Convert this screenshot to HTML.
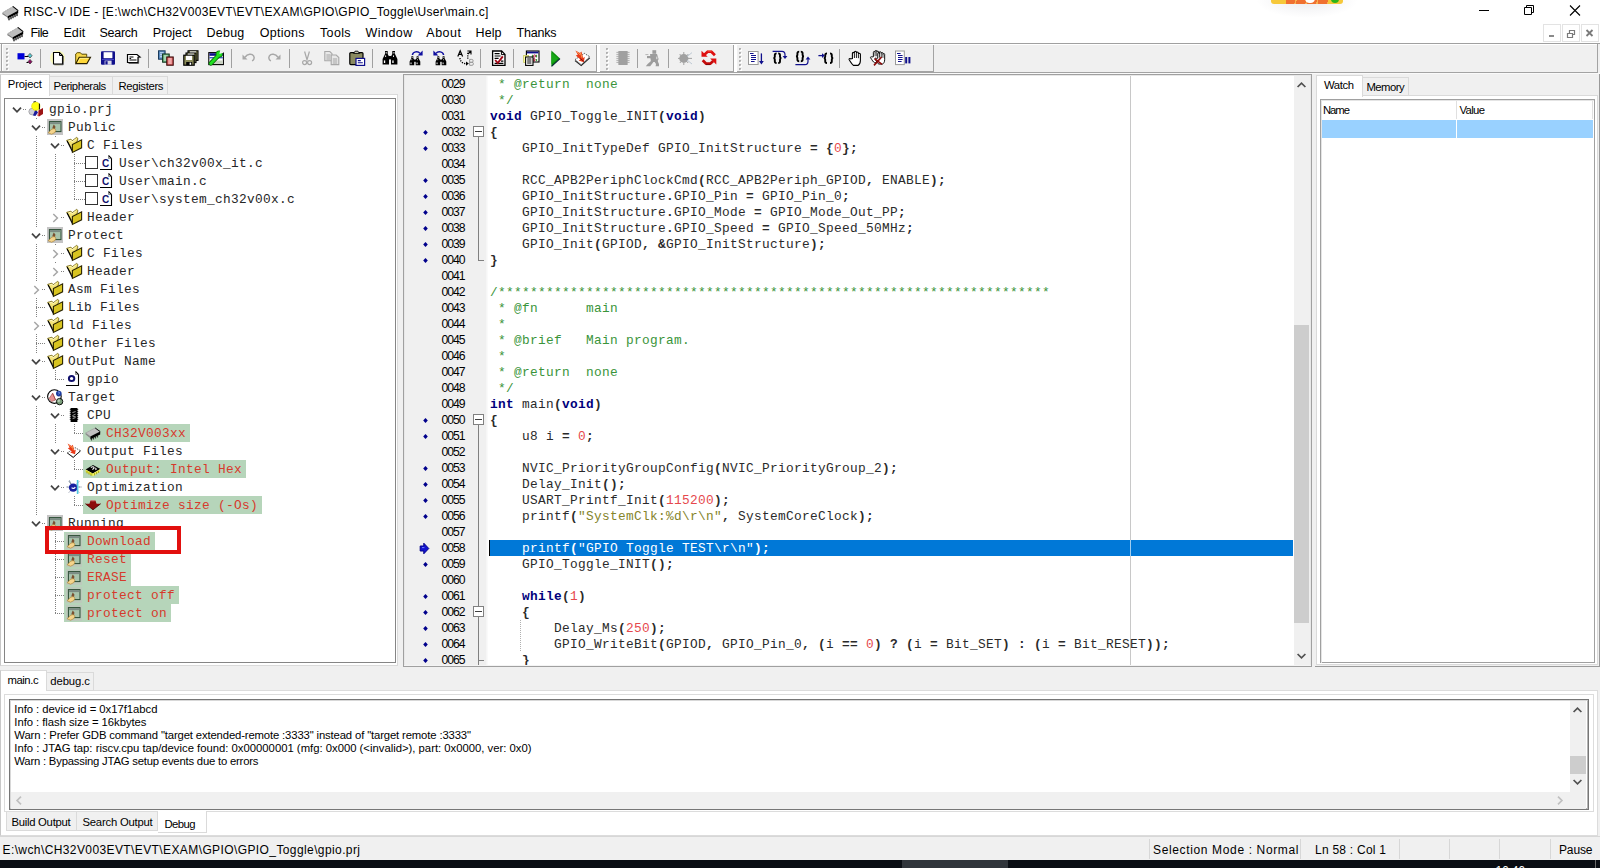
<!DOCTYPE html>
<html><head><meta charset="utf-8"><title>RISC-V IDE</title><style>
html,body{margin:0;padding:0}
body{width:1600px;height:868px;position:relative;overflow:hidden;background:#f0f0f0;font-family:"Liberation Sans",sans-serif;font-size:11px;color:#000}
div,span,svg{box-sizing:border-box}
.m{font-family:"Liberation Mono",monospace;font-size:12.8px;letter-spacing:0.32px;white-space:pre}
svg{position:absolute;overflow:visible}
</style></head>
<body>
<div style="position:absolute;left:0px;top:0px;width:1600px;height:43px;background:#fff"></div>
<div style="position:absolute;left:0px;top:43px;width:1600px;height:1px;background:#a0a0a0"></div>
<svg style="left:1.8px;top:5.6px" width="17" height="14" viewBox="0 0 17 14"><polygon points="0.4,6.6 10.8,0.4 16.2,4.6 5.6,10.2" fill="#bdbdbd"/><path d="M1.4,6.2l9.4,-5.6" stroke="#9a9a9a" stroke-width=".8" stroke-dasharray="1.2,.8"/><path d="M10.8,0.4l5.4,4.2" stroke="#000" stroke-width="1.1"/><polygon points="0.4,6.6 5.6,10.2 5.6,11.4 0.4,8.2" fill="#808080"/><polygon points="5.6,10.2 16.2,4.6 16.2,7.2 5.6,12.6" fill="#000"/><rect x="6.4" y="12.00" width="1.2" height="2.3" fill="#000"/><rect x="8.4" y="10.95" width="1.2" height="2.3" fill="#000"/><rect x="10.4" y="9.90" width="1.2" height="2.3" fill="#000"/><rect x="12.4" y="8.85" width="1.2" height="2.3" fill="#000"/><rect x="14.4" y="7.80" width="1.2" height="2.3" fill="#000"/></svg>
<svg style="left:6.8px;top:26.6px" width="17" height="14" viewBox="0 0 17 14"><polygon points="0.4,6.6 10.8,0.4 16.2,4.6 5.6,10.2" fill="#bdbdbd"/><path d="M1.4,6.2l9.4,-5.6" stroke="#9a9a9a" stroke-width=".8" stroke-dasharray="1.2,.8"/><path d="M10.8,0.4l5.4,4.2" stroke="#000" stroke-width="1.1"/><polygon points="0.4,6.6 5.6,10.2 5.6,11.4 0.4,8.2" fill="#808080"/><polygon points="5.6,10.2 16.2,4.6 16.2,7.2 5.6,12.6" fill="#000"/><rect x="6.4" y="12.00" width="1.2" height="2.3" fill="#000"/><rect x="8.4" y="10.95" width="1.2" height="2.3" fill="#000"/><rect x="10.4" y="9.90" width="1.2" height="2.3" fill="#000"/><rect x="12.4" y="8.85" width="1.2" height="2.3" fill="#000"/><rect x="14.4" y="7.80" width="1.2" height="2.3" fill="#000"/></svg>
<div style="position:absolute;left:23.40px;top:3.60px;height:16px;line-height:16px;font-size:12px;letter-spacing:0.317px;color:#000;white-space:pre;font-weight:400;font-family:'Liberation Sans',sans-serif;">RISC-V IDE - [E:\wch\CH32V003EVT\EVT\EXAM\GPIO\GPIO_Toggle\User\main.c]</div>
<div style="position:absolute;left:30.60px;top:24.80px;height:16px;line-height:16px;font-size:12.5px;letter-spacing:-0.652px;color:#000;white-space:pre;font-weight:400;font-family:'Liberation Sans',sans-serif;">File</div>
<div style="position:absolute;left:63.40px;top:24.80px;height:16px;line-height:16px;font-size:12.5px;letter-spacing:0.118px;color:#000;white-space:pre;font-weight:400;font-family:'Liberation Sans',sans-serif;">Edit</div>
<div style="position:absolute;left:99.40px;top:24.80px;height:16px;line-height:16px;font-size:12.5px;letter-spacing:-0.242px;color:#000;white-space:pre;font-weight:400;font-family:'Liberation Sans',sans-serif;">Search</div>
<div style="position:absolute;left:152.80px;top:24.80px;height:16px;line-height:16px;font-size:12.5px;letter-spacing:0.016px;color:#000;white-space:pre;font-weight:400;font-family:'Liberation Sans',sans-serif;">Project</div>
<div style="position:absolute;left:206.60px;top:24.80px;height:16px;line-height:16px;font-size:12.5px;letter-spacing:0.214px;color:#000;white-space:pre;font-weight:400;font-family:'Liberation Sans',sans-serif;">Debug</div>
<div style="position:absolute;left:259.70px;top:24.80px;height:16px;line-height:16px;font-size:12.5px;letter-spacing:0.301px;color:#000;white-space:pre;font-weight:400;font-family:'Liberation Sans',sans-serif;">Options</div>
<div style="position:absolute;left:320.00px;top:24.80px;height:16px;line-height:16px;font-size:12.5px;letter-spacing:0.353px;color:#000;white-space:pre;font-weight:400;font-family:'Liberation Sans',sans-serif;">Tools</div>
<div style="position:absolute;left:365.40px;top:24.80px;height:16px;line-height:16px;font-size:12.5px;letter-spacing:0.486px;color:#000;white-space:pre;font-weight:400;font-family:'Liberation Sans',sans-serif;">Window</div>
<div style="position:absolute;left:426.30px;top:24.80px;height:16px;line-height:16px;font-size:12.5px;letter-spacing:0.507px;color:#000;white-space:pre;font-weight:400;font-family:'Liberation Sans',sans-serif;">About</div>
<div style="position:absolute;left:475.60px;top:24.80px;height:16px;line-height:16px;font-size:12.5px;letter-spacing:0.060px;color:#000;white-space:pre;font-weight:400;font-family:'Liberation Sans',sans-serif;">Help</div>
<div style="position:absolute;left:516.50px;top:24.80px;height:16px;line-height:16px;font-size:12.5px;letter-spacing:-0.180px;color:#000;white-space:pre;font-weight:400;font-family:'Liberation Sans',sans-serif;">Thanks</div>
<svg style="left:1470px;top:0" width="130" height="22" viewBox="0 0 130 22"><path d="M9,10.5h10" stroke="#000" stroke-width="1"/><path d="M54.5,7.5h7v7h-7z M56.5,7.5v-2h7v7h-2" fill="none" stroke="#000" stroke-width="1"/><path d="M100,5.5l10,10 M110,5.5l-10,10" stroke="#000" stroke-width="1.1"/></svg>
<div style="position:absolute;left:1543px;top:24px;width:18px;height:18px;background:#fff;border:1px solid #e3e3e3"></div>
<div style="position:absolute;left:1562px;top:24px;width:18px;height:18px;background:#fff;border:1px solid #e3e3e3"></div>
<div style="position:absolute;left:1581px;top:24px;width:18px;height:18px;background:#fff;border:1px solid #e3e3e3"></div>
<svg style="left:1543px;top:24px" width="56" height="18" viewBox="0 0 56 18"><path d="M6,12h5" stroke="#8a8a8a" stroke-width="2"/><path d="M24.5,9.5h5v4h-5z M26.5,9.5v-3h5v4h-2" fill="none" stroke="#7a7a7a" stroke-width="1.2"/><path d="M43.5,6l6,6 M49.5,6l-6,6" stroke="#7a7a7a" stroke-width="1.8"/></svg>
<div style="position:absolute;left:1256px;top:0px;width:102px;height:18px;background:radial-gradient(ellipse 50% 100% at 50% 0%, rgba(60,60,90,0.11), rgba(60,60,90,0.04) 60%, rgba(0,0,0,0) 100%)"></div>
<div style="position:absolute;left:1271px;top:0px;width:72px;height:4px;background:#f6c83a;border-radius:0 0 3px 3px"></div>
<div style="position:absolute;left:1286px;top:0px;width:42px;height:4px;background:repeating-linear-gradient(105deg,#f07030 0 9px,#f8b050 9px 10.5px)"></div>
<div style="position:absolute;left:1304.5px;top:-6px;width:10px;height:9px;background:#fff;border-radius:5px"></div>
<div style="position:absolute;left:1331px;top:-5px;width:8px;height:7.5px;background:#2cb418;border-radius:4px"></div>
<div style="position:absolute;left:0px;top:836px;width:1600px;height:1px;background:#d7d7d7"></div>
<div style="position:absolute;left:2.50px;top:841.60px;height:16px;line-height:16px;font-size:12px;letter-spacing:0.398px;color:#000;white-space:pre;font-weight:400;font-family:'Liberation Sans',sans-serif;">E:\wch\CH32V003EVT\EVT\EXAM\GPIO\GPIO_Toggle\gpio.prj</div>
<div style="position:absolute;left:1149px;top:839px;width:1px;height:20px;background:#d7d7d7"></div>
<div style="position:absolute;left:1300px;top:839px;width:1px;height:20px;background:#d7d7d7"></div>
<div style="position:absolute;left:1399px;top:839px;width:1px;height:20px;background:#d7d7d7"></div>
<div style="position:absolute;left:1449px;top:839px;width:1px;height:20px;background:#d7d7d7"></div>
<div style="position:absolute;left:1499px;top:839px;width:1px;height:20px;background:#d7d7d7"></div>
<div style="position:absolute;left:1550px;top:839px;width:1px;height:20px;background:#d7d7d7"></div>
<div style="position:absolute;left:1153.00px;top:841.60px;height:16px;line-height:16px;font-size:12px;letter-spacing:0.641px;color:#000;white-space:pre;font-weight:400;font-family:'Liberation Sans',sans-serif;">Selection Mode : Normal</div>
<div style="position:absolute;left:1315.00px;top:841.60px;height:16px;line-height:16px;font-size:12px;letter-spacing:0.246px;color:#000;white-space:pre;font-weight:400;font-family:'Liberation Sans',sans-serif;">Ln 58 : Col 1</div>
<div style="position:absolute;left:1559.00px;top:841.60px;height:16px;line-height:16px;font-size:12px;letter-spacing:-0.133px;color:#000;white-space:pre;font-weight:400;font-family:'Liberation Sans',sans-serif;">Pause</div>
<div style="position:absolute;left:0px;top:860px;width:1600px;height:8px;background:#090d13"></div>
<div style="position:absolute;left:902px;top:860px;width:106px;height:8px;background:#30353b"></div>
<div style="position:absolute;left:1495.50px;top:862.60px;height:16px;line-height:16px;font-size:12px;letter-spacing:-0.133px;color:#fff;white-space:pre;font-weight:400;font-family:'Liberation Sans',sans-serif;">16:46</div>
<div style="position:absolute;left:1595px;top:860px;width:1px;height:8px;background:#6a6a6a"></div>
<div style="position:absolute;left:0px;top:44px;width:1600px;height:28px;background:#f0f0f0"></div>
<div style="position:absolute;left:0px;top:44px;width:1598px;height:1px;background:#fff"></div>
<div style="position:absolute;left:0px;top:71px;width:934px;height:1px;background:#a3a3a3"></div>
<div style="position:absolute;left:0px;top:72px;width:1598px;height:1px;background:#a3a3a3"></div>
<div style="position:absolute;left:0px;top:73px;width:1600px;height:1px;background:#fafafa"></div>
<div style="position:absolute;left:1597px;top:44px;width:1px;height:28px;background:#a3a3a3"></div>
<div style="position:absolute;left:1px;top:44px;width:1px;height:27px;background:#a3a3a3"></div>
<div style="position:absolute;left:2px;top:45px;width:1px;height:26px;background:#fff"></div>
<div style="position:absolute;left:596px;top:45px;width:1px;height:26px;background:#a3a3a3"></div>
<div style="position:absolute;left:597px;top:45px;width:3px;height:27px;background:#fff"></div>
<div style="position:absolute;left:733px;top:45px;width:1px;height:26px;background:#a3a3a3"></div>
<div style="position:absolute;left:734px;top:45px;width:3px;height:27px;background:#fff"></div>
<div style="position:absolute;left:933px;top:45px;width:1px;height:26px;background:#a3a3a3"></div>
<div style="position:absolute;left:934px;top:45px;width:1px;height:27px;background:#f0f0f0"></div>
<div style="position:absolute;left:6px;top:48px;width:2px;height:2px;background:#b0b0b0"></div><div style="position:absolute;left:7px;top:49px;width:2px;height:2px;background:#fff"></div><div style="position:absolute;left:7px;top:49px;width:1px;height:1px;background:#c8c8c8"></div><div style="position:absolute;left:6px;top:52px;width:2px;height:2px;background:#b0b0b0"></div><div style="position:absolute;left:7px;top:53px;width:2px;height:2px;background:#fff"></div><div style="position:absolute;left:7px;top:53px;width:1px;height:1px;background:#c8c8c8"></div><div style="position:absolute;left:6px;top:56px;width:2px;height:2px;background:#b0b0b0"></div><div style="position:absolute;left:7px;top:57px;width:2px;height:2px;background:#fff"></div><div style="position:absolute;left:7px;top:57px;width:1px;height:1px;background:#c8c8c8"></div><div style="position:absolute;left:6px;top:60px;width:2px;height:2px;background:#b0b0b0"></div><div style="position:absolute;left:7px;top:61px;width:2px;height:2px;background:#fff"></div><div style="position:absolute;left:7px;top:61px;width:1px;height:1px;background:#c8c8c8"></div><div style="position:absolute;left:6px;top:64px;width:2px;height:2px;background:#b0b0b0"></div><div style="position:absolute;left:7px;top:65px;width:2px;height:2px;background:#fff"></div><div style="position:absolute;left:7px;top:65px;width:1px;height:1px;background:#c8c8c8"></div><div style="position:absolute;left:6px;top:68px;width:2px;height:2px;background:#b0b0b0"></div><div style="position:absolute;left:7px;top:69px;width:2px;height:2px;background:#fff"></div><div style="position:absolute;left:7px;top:69px;width:1px;height:1px;background:#c8c8c8"></div>
<div style="position:absolute;left:606px;top:48px;width:2px;height:2px;background:#b0b0b0"></div><div style="position:absolute;left:607px;top:49px;width:2px;height:2px;background:#fff"></div><div style="position:absolute;left:607px;top:49px;width:1px;height:1px;background:#c8c8c8"></div><div style="position:absolute;left:606px;top:52px;width:2px;height:2px;background:#b0b0b0"></div><div style="position:absolute;left:607px;top:53px;width:2px;height:2px;background:#fff"></div><div style="position:absolute;left:607px;top:53px;width:1px;height:1px;background:#c8c8c8"></div><div style="position:absolute;left:606px;top:56px;width:2px;height:2px;background:#b0b0b0"></div><div style="position:absolute;left:607px;top:57px;width:2px;height:2px;background:#fff"></div><div style="position:absolute;left:607px;top:57px;width:1px;height:1px;background:#c8c8c8"></div><div style="position:absolute;left:606px;top:60px;width:2px;height:2px;background:#b0b0b0"></div><div style="position:absolute;left:607px;top:61px;width:2px;height:2px;background:#fff"></div><div style="position:absolute;left:607px;top:61px;width:1px;height:1px;background:#c8c8c8"></div><div style="position:absolute;left:606px;top:64px;width:2px;height:2px;background:#b0b0b0"></div><div style="position:absolute;left:607px;top:65px;width:2px;height:2px;background:#fff"></div><div style="position:absolute;left:607px;top:65px;width:1px;height:1px;background:#c8c8c8"></div><div style="position:absolute;left:606px;top:68px;width:2px;height:2px;background:#b0b0b0"></div><div style="position:absolute;left:607px;top:69px;width:2px;height:2px;background:#fff"></div><div style="position:absolute;left:607px;top:69px;width:1px;height:1px;background:#c8c8c8"></div>
<div style="position:absolute;left:739px;top:48px;width:2px;height:2px;background:#b0b0b0"></div><div style="position:absolute;left:740px;top:49px;width:2px;height:2px;background:#fff"></div><div style="position:absolute;left:740px;top:49px;width:1px;height:1px;background:#c8c8c8"></div><div style="position:absolute;left:739px;top:52px;width:2px;height:2px;background:#b0b0b0"></div><div style="position:absolute;left:740px;top:53px;width:2px;height:2px;background:#fff"></div><div style="position:absolute;left:740px;top:53px;width:1px;height:1px;background:#c8c8c8"></div><div style="position:absolute;left:739px;top:56px;width:2px;height:2px;background:#b0b0b0"></div><div style="position:absolute;left:740px;top:57px;width:2px;height:2px;background:#fff"></div><div style="position:absolute;left:740px;top:57px;width:1px;height:1px;background:#c8c8c8"></div><div style="position:absolute;left:739px;top:60px;width:2px;height:2px;background:#b0b0b0"></div><div style="position:absolute;left:740px;top:61px;width:2px;height:2px;background:#fff"></div><div style="position:absolute;left:740px;top:61px;width:1px;height:1px;background:#c8c8c8"></div><div style="position:absolute;left:739px;top:64px;width:2px;height:2px;background:#b0b0b0"></div><div style="position:absolute;left:740px;top:65px;width:2px;height:2px;background:#fff"></div><div style="position:absolute;left:740px;top:65px;width:1px;height:1px;background:#c8c8c8"></div><div style="position:absolute;left:739px;top:68px;width:2px;height:2px;background:#b0b0b0"></div><div style="position:absolute;left:740px;top:69px;width:2px;height:2px;background:#fff"></div><div style="position:absolute;left:740px;top:69px;width:1px;height:1px;background:#c8c8c8"></div>
<div style="position:absolute;left:40px;top:49px;width:1px;height:19px;background:#a0a0a0"></div>
<div style="position:absolute;left:148px;top:49px;width:1px;height:19px;background:#a0a0a0"></div>
<div style="position:absolute;left:231px;top:49px;width:1px;height:19px;background:#a0a0a0"></div>
<div style="position:absolute;left:289px;top:49px;width:1px;height:19px;background:#a0a0a0"></div>
<div style="position:absolute;left:372px;top:49px;width:1px;height:19px;background:#a0a0a0"></div>
<div style="position:absolute;left:480px;top:49px;width:1px;height:19px;background:#a0a0a0"></div>
<div style="position:absolute;left:513px;top:49px;width:1px;height:19px;background:#a0a0a0"></div>
<div style="position:absolute;left:637px;top:49px;width:1px;height:19px;background:#a0a0a0"></div>
<div style="position:absolute;left:668px;top:49px;width:1px;height:19px;background:#a0a0a0"></div>
<div style="position:absolute;left:839px;top:49px;width:1px;height:19px;background:#a0a0a0"></div>
<svg style="left:16.50px;top:50px" width="16" height="17" viewBox="0 0 16 17"><rect x="0.5" y="3.2" width="7" height="6.2" fill="#0000d8"/><path d="M7.5,6.5h4M9.5,12.5h2" stroke="#000" stroke-width="1"/><path d="M13,3.4l2.1,2.3l-2.1,2.3l-2.1,-2.3z" fill="#58c8d0" stroke="#222" stroke-width=".6"/><path d="M13,9.4l2.1,2.3l-2.1,2.3l-2.1,-2.3z" fill="#8a1060" stroke="#222" stroke-width=".6"/></svg>
<svg style="left:50.00px;top:50px" width="16" height="17" viewBox="0 0 16 17"><circle cx="7.5" cy="8" r="7.6" fill="#ffff90" opacity=".55"/><path d="M3.5,2.5h6l3,3v8.5h-9z" fill="#fff" stroke="#000" stroke-width="1.1"/><path d="M9.5,2.5v3h3" fill="none" stroke="#000" stroke-width="1"/><path d="M13.2,6v8.7h-9" fill="none" stroke="#333" stroke-width=".9"/></svg>
<svg style="left:75.00px;top:50px" width="16" height="17" viewBox="0 0 16 17"><path d="M0.7,13.5v-9.5l1.5,-1.3h3.2l1.3,1.5h5v2.5" fill="#f8d84a" stroke="#5a4a00" stroke-width="1"/><path d="M0.9,13.6l3.3,-6.3h11.3l-3.6,6.3z" fill="#ffd83a" stroke="#2a2000" stroke-width="1.1"/><path d="M3,12.4l2,-4h8.6" stroke="#fff4a0" stroke-width=".8" fill="none"/></svg>
<svg style="left:100.00px;top:50px" width="16" height="17" viewBox="0 0 16 17"><rect x="1" y="1.2" width="14" height="13.6" rx="1" fill="#10108c"/><rect x="3.6" y="2.2" width="8.8" height="6" fill="#fff"/><rect x="4.6" y="10.6" width="7" height="4.2" fill="#d8d8e8"/><rect x="5.4" y="11.2" width="2.2" height="3.2" fill="#10108c"/><rect x="2" y="9" width="12" height=".9" fill="#4a4acc"/></svg>
<svg style="left:125.00px;top:50px" width="16" height="17" viewBox="0 0 16 17"><path d="M2.5,4.5h9.5l3,2.6l-2,.1v5.3h-10.5z" fill="#fff" stroke="#000" stroke-width="1.2"/><path d="M4.5,7h4M4.5,10h7M4.5,8.5h1.6" stroke="#000" stroke-width="1.1"/><path d="M13.6,8v5.4h-10" stroke="#444" stroke-width=".9" fill="none"/></svg>
<svg style="left:157.50px;top:50px" width="16" height="17" viewBox="0 0 16 17"><rect x="0.5" y="0.8" width="6.6" height="8.4" fill="#5c8cc0" stroke="#1a3a5c" stroke-width="1"/><path d="M2,2.8h3.6M2,4.8h3.6M2,6.8h3.6" stroke="#d8e8ff" stroke-width="1"/><rect x="4.6" y="4" width="6.6" height="8.2" fill="#6cb080" stroke="#0c3018" stroke-width="1"/><path d="M6.1,6h3.6M6.1,8h3.6M6.1,10h3.6" stroke="#e0ffe8" stroke-width="1"/><rect x="8.8" y="7" width="6.4" height="8.2" fill="#e06868" stroke="#3a0606" stroke-width="1.1"/><path d="M10.3,9h3.4M10.3,11h3.4M10.3,13h3.4" stroke="#ffe8e8" stroke-width="1"/></svg>
<svg style="left:182.50px;top:50px" width="16" height="17" viewBox="0 0 16 17"><rect x="5" y="0.8" width="10" height="9.6" fill="#8a8a58" stroke="#000" stroke-width="1.1"/><rect x="7" y="1.4" width="6" height="3" fill="#fff"/><rect x="3" y="3" width="10" height="9.6" fill="#8a8a58" stroke="#000" stroke-width="1.1"/><rect x="5" y="3.6" width="6" height="3" fill="#fff"/><rect x="0.8" y="5.2" width="10.4" height="10" fill="#8a8a58" stroke="#000" stroke-width="1.2"/><rect x="3" y="5.8" width="6" height="4.2" fill="#fff"/><rect x="3.2" y="12" width="6" height="3.2" fill="#000"/><rect x="6.6" y="12.6" width="1.6" height="2.2" fill="#fff"/></svg>
<svg style="left:208.00px;top:50px" width="16" height="17" viewBox="0 0 16 17"><rect x="0.8" y="2.6" width="14.6" height="12" fill="#fff" stroke="#000" stroke-width="1.1"/><rect x="1.4" y="3.2" width="13.4" height="2.6" fill="#10108c"/><rect x="1.4" y="7" width="13.4" height="1.4" fill="#4060c0"/><rect x="1.4" y="10.5" width="13.4" height="3.4" fill="#c8d0c0"/><path d="M2.8,13.4l7.6,-7.8" stroke="#0a6a0a" stroke-width="4.4" stroke-linecap="round"/><circle cx="11.2" cy="4" r="3.6" fill="#0a6a0a"/><path d="M2.8,13.4l7.6,-7.8" stroke="#20e020" stroke-width="2.8" stroke-linecap="round"/><circle cx="11.2" cy="4" r="2.8" fill="#20e020"/><path d="M11.4,3.8l1,-4l3.6,3z" fill="#f0f0f0"/><path d="M11.6,3.6l1.4,-2.6l1.8,1.6z" fill="#f0f0f0"/></svg>
<svg style="left:241.00px;top:50px" width="16" height="17" viewBox="0 0 16 17"><path d="M1.5,9.5v-5l5,5z" fill="#a8a8a8"/><path d="M4,7.2c2.5,-3.6 7,-3.8 8.6,-1.4c1.4,2.2 0,4.6 -1.6,5" fill="none" stroke="#a8a8a8" stroke-width="1.5"/></svg>
<svg style="left:266.00px;top:50px" width="16" height="17" viewBox="0 0 16 17"><path d="M14.5,9.5v-5l-5,5z" fill="#a8a8a8"/><path d="M12,7.2c-2.5,-3.6 -7,-3.8 -8.6,-1.4c-1.4,2.2 0,4.6 1.6,5" fill="none" stroke="#a8a8a8" stroke-width="1.5"/></svg>
<svg style="left:298.50px;top:50px" width="16" height="17" viewBox="0 0 16 17"><path d="M5.6,1.5l2.6,9M10.4,1.5l-2.6,9" stroke="#a8a8a8" stroke-width="1.2" fill="none"/><circle cx="5.6" cy="12.6" r="2" fill="none" stroke="#a8a8a8" stroke-width="1.2"/><circle cx="10.6" cy="12.6" r="2" fill="none" stroke="#a8a8a8" stroke-width="1.2"/></svg>
<svg style="left:323.50px;top:50px" width="16" height="17" viewBox="0 0 16 17"><path d="M0.8,1.5h5l2.2,2.2v7h-7.2z" fill="#e8e8e8" stroke="#a8a8a8" stroke-width="1.1"/><path d="M2.4,5h4M2.4,7h4M2.4,9h4" stroke="#a4a4a4" stroke-width="1"/><path d="M7.2,5h5l2.6,2.6v7h-7.6z" fill="#e8e8e8" stroke="#a8a8a8" stroke-width="1.1"/><path d="M8.8,9h4.4M8.8,11h4.4M8.8,13h4.4" stroke="#a4a4a4" stroke-width="1"/></svg>
<svg style="left:349.00px;top:50px" width="16" height="17" viewBox="0 0 16 17"><rect x="0.8" y="2.6" width="13.2" height="12" rx="1" fill="#8a8a60" stroke="#000" stroke-width="1.2"/><path d="M4.5,3.4l1.6,-2.2h2.8l1.6,2.2z" fill="#d8d8c0" stroke="#000" stroke-width=".9"/><rect x="7" y="8.4" width="8.6" height="7" fill="#fff" stroke="#10108c" stroke-width="1.2"/><path d="M8.8,10.6h3M8.8,12.8h5" stroke="#10108c" stroke-width="1.1"/></svg>
<svg style="left:381.50px;top:50px" width="16" height="17" viewBox="0 0 16 17"><path d="M3,1h2.7v3l1.3,2.4v8.2h-6.4v-5.6l2.4,-5z" fill="#000"/><path d="M13,1h-2.7v3l-1.3,2.4v8.2h6.4v-5.6l-2.4,-5z" fill="#000"/><rect x="6.5" y="6" width="3" height="3.4" fill="#000"/><rect x="1.9" y="10.4" width="1.3" height="2.6" fill="#fff"/><rect x="10.3" y="10.4" width="1.3" height="2.6" fill="#fff"/><rect x="3.7" y="2" width=".9" height="1.6" fill="#fff"/><rect x="11.5" y="2" width=".9" height="1.6" fill="#fff"/><rect x="3.2" y="5.4" width=".9" height="1.6" fill="#fff"/><rect x="11" y="5.4" width=".9" height="1.6" fill="#fff"/></svg>
<svg style="left:407.50px;top:50px" width="16" height="17" viewBox="0 0 16 17"><g transform="translate(1.2,5.6) scale(.72,.66)"><path d="M3,1h2.7v3l1.3,2.4v8.2h-6.4v-5.6l2.4,-5z" fill="#000"/><path d="M13,1h-2.7v3l-1.3,2.4v8.2h6.4v-5.6l-2.4,-5z" fill="#000"/><rect x="6.5" y="6" width="3" height="3.4" fill="#000"/><rect x="1.9" y="10.4" width="1.3" height="2.6" fill="#fff"/><rect x="10.3" y="10.4" width="1.3" height="2.6" fill="#fff"/><rect x="3.7" y="2" width=".9" height="1.6" fill="#fff"/><rect x="11.5" y="2" width=".9" height="1.6" fill="#fff"/><rect x="3.2" y="5.4" width=".9" height="1.6" fill="#fff"/><rect x="11" y="5.4" width=".9" height="1.6" fill="#fff"/></g><path d="M4.4,5c.6,-3.6 5.6,-4.2 7.6,-1.6" fill="none" stroke="#1010a0" stroke-width="1.5"/><path d="M14.6,0.6v5h-5z" fill="#1010a0"/></svg>
<svg style="left:431.50px;top:50px" width="16" height="17" viewBox="0 0 16 17"><g transform="translate(3.2,5.6) scale(.72,.66)"><path d="M3,1h2.7v3l1.3,2.4v8.2h-6.4v-5.6l2.4,-5z" fill="#000"/><path d="M13,1h-2.7v3l-1.3,2.4v8.2h6.4v-5.6l-2.4,-5z" fill="#000"/><rect x="6.5" y="6" width="3" height="3.4" fill="#000"/><rect x="1.9" y="10.4" width="1.3" height="2.6" fill="#fff"/><rect x="10.3" y="10.4" width="1.3" height="2.6" fill="#fff"/><rect x="3.7" y="2" width=".9" height="1.6" fill="#fff"/><rect x="11.5" y="2" width=".9" height="1.6" fill="#fff"/><rect x="3.2" y="5.4" width=".9" height="1.6" fill="#fff"/><rect x="11" y="5.4" width=".9" height="1.6" fill="#fff"/></g><path d="M11.6,5c-.6,-3.6 -5.6,-4.2 -7.6,-1.6" fill="none" stroke="#1010a0" stroke-width="1.5"/><path d="M1.4,0.6v5h5z" fill="#1010a0"/></svg>
<svg style="left:456.50px;top:50px" width="16" height="17" viewBox="0 0 16 17"><path d="M0.8,6.4l2.4,-5.6l2.4,5.6M1.8,4.4h2.8" fill="none" stroke="#000" stroke-width="1.2"/><path d="M3,8c.2,4 3.2,5.8 6.4,5.6" fill="none" stroke="#000" stroke-width="1.3" stroke-dasharray="1.2,1.2"/><path d="M9,11.4l2.8,2.2l-2.8,2.2z" fill="#000"/><path d="M10.8,8.8v-6.4" fill="none" stroke="#000" stroke-width="1.2" stroke-dasharray="1.2,1.2"/><path d="M10.4,1h3.6v3.4M14,1l-3,3" fill="none" stroke="#000" stroke-width="1.1"/><path d="M12.6,9.4h2.2a1.3,1.4 0 0 1 0,2.9h-2.2zM12.6,12.3h2.4a1.4,1.5 0 0 1 0,3h-2.4z" fill="none" stroke="#9a9a9a" stroke-width="1"/></svg>
<svg style="left:490.50px;top:50px" width="16" height="17" viewBox="0 0 16 17"><path d="M1.6,1h9l3.4,3.4v11h-12.4z" fill="#fff" stroke="#000" stroke-width="1.3"/><path d="M10.4,1v3.6h3.6" fill="none" stroke="#000" stroke-width="1"/><path d="M3.6,3.6h5M3.6,6h6M3.6,8.4h4M10,11.2h2.4M3.6,13.4h8.8" stroke="#000" stroke-width="1.2"/><path d="M4.2,10l2.6,3l5,-6.6" fill="none" stroke="#a00818" stroke-width="1.9"/></svg>
<svg style="left:523.00px;top:50px" width="16" height="17" viewBox="0 0 16 17"><rect x="3.4" y="1" width="12.6" height="11" fill="#fff" stroke="#000" stroke-width="1.1"/><rect x="4" y="1.6" width="11.4" height="1.8" fill="#10108c"/><path d="M9.4,4.8v2.6M13.6,4.8v2.6M13.6,9v2" stroke="#1c9a1c" stroke-width="1"/><circle cx="11.6" cy="6" r="1.1" fill="none" stroke="#a01030" stroke-width=".9"/><circle cx="11" cy="9.8" r="1.2" fill="#f0b0a0" stroke="#a01030" stroke-width=".9"/><rect x="0.6" y="5.4" width="5" height="7" fill="#ffffa0" stroke="#c8c860" stroke-width=".8"/><rect x="2.6" y="7" width="7.4" height="8.4" fill="#fff" stroke="#000" stroke-width="1.1"/><path d="M4.2,9h4.2M4.2,11h4.2M4.2,13h4.2" stroke="#000" stroke-width="1"/></svg>
<svg style="left:548.00px;top:50px" width="16" height="17" viewBox="0 0 16 17"><path d="M3.4,0.6l8.6,8l-8.6,8z" fill="#0c8c0c"/><path d="M3.4,2.2l6.8,6.4l-6.8,5.4z" fill="#18a818"/><path d="M3.6,16.4l8.4,-7.8" stroke="#023" stroke-width="1.1"/></svg>
<svg style="left:573.50px;top:50px" width="16" height="17" viewBox="0 0 16 17"><path d="M1,9.6l9.4,-6.2l5.4,3.4l-8.6,7.8z" fill="#fff" stroke="#444" stroke-width=".9" stroke-dasharray="1.6,1"/><path d="M1,10.6l6.2,5l8.6,-7.8" fill="none" stroke="#222" stroke-width="1.1"/><path d="M1.4,0.4l4.6,2.6l1.4,-1.4l1.8,6.4l1.6,-1.2l-1,5.4l-5.2,-1.8l1.8,-1l-4.6,-3.8l2,-.8z" fill="#e83a18"/><path d="M2.4,1.6l3.6,3l.6,-1.4l1.4,4.6" stroke="#ffb060" stroke-width=".8" fill="none"/><path d="M6.2,8.6l3.4,2.6" stroke="#801010" stroke-width="1"/></svg>
<svg style="left:615.00px;top:50px" width="16" height="17" viewBox="0 0 16 17"><rect x="3.6" y="1" width="8.8" height="14" fill="#a0a0a0"/><path d="M1.4,2.4h13.2M1.4,4.4h13.2M1.4,6.4h13.2M1.4,8.4h13.2M1.4,10.4h13.2M1.4,12.4h13.2" stroke="#a8a8a8" stroke-width=".9"/><rect x="3.6" y="1" width="8.8" height="14" fill="#a0a0a0"/></svg>
<svg style="left:645.00px;top:50px" width="16" height="17" viewBox="0 0 16 17"><rect x="7.4" y="0.2" width="3.8" height="3.6" fill="#9c9c9c"/><path d="M5,4h7l1.6,5l-1.4,3h-6.2l-.6,-4z" fill="#9c9c9c"/><rect x="2" y="6" width="4.4" height="2.2" fill="#9c9c9c"/><path d="M0.4,4.6h3" stroke="#b4b4b4" stroke-width="1"/><path d="M6,11h3.2l-4,5.2h-4.4l1.8,-2.2z" fill="#9c9c9c"/><path d="M9,11h3.6l1.4,3v2.2h-3.4l.4,-2.2z" fill="#9c9c9c"/><rect x="11.2" y="6.6" width="1.2" height="2.6" fill="#dcdcdc"/></svg>
<svg style="left:677.00px;top:50px" width="16" height="17" viewBox="0 0 16 17"><ellipse cx="6.8" cy="8.4" rx="4.6" ry="4.4" fill="#a0a0a0"/><path d="M6.8,2v13M1,8.4h14M2.6,4l8.6,9M11.4,4l-8.6,9" stroke="#a0a0a0" stroke-width="1"/><path d="M10,6.6l5,-4M10,10l5,4" stroke="#b8c4d0" stroke-width=".9"/></svg>
<svg style="left:700.50px;top:50px" width="16" height="17" viewBox="0 0 16 17"><path d="M3.6,4.4L6.6,1.7H10.4L13.9,5.2" fill="none" stroke="#de1010" stroke-width="2.7" stroke-linejoin="round"/><path d="M0.5,0.8V6.8H6.7z" fill="#de1010"/><path d="M12.2,11L9.2,13.7H5.2L1.7,10.2" fill="none" stroke="#c40c0c" stroke-width="2.7" stroke-linejoin="round"/><path d="M15.3,14.6V8.6H9.1z" fill="#de1010"/><path d="M6.6,0.9H10.6" stroke="#ff8a70" stroke-width=".8"/><path d="M5,14.6H9.2" stroke="#7a0606" stroke-width=".9"/></svg>
<svg style="left:748.00px;top:50px" width="16" height="17" viewBox="0 0 16 17"><rect x="0.5" y="1.5" width="9.6" height="13" fill="#fff" stroke="#9a9a9a" stroke-width="1"/><path d="M2,3.5h3.6M3,5.5h5M3,7.5h5M3,9.5h5M3,11.5h3.6" stroke="#10108c" stroke-width="1"/><path d="M13.4,3.4v9" stroke="#10108c" stroke-width="1.3"/><path d="M11,11l2.4,3.4l2.4,-3.4z" fill="#10108c"/></svg>
<svg style="left:771.50px;top:50px" width="16" height="17" viewBox="0 0 16 17"><path d="M4.6,3.4c-1.4,0 -1.8,.6 -1.8,1.8v1.6c0,.8 -.4,1.2 -1.2,1.4c.8,.2 1.2,.6 1.2,1.4v1.6c0,1.2 .4,1.8 1.8,1.8" fill="none" stroke="#000" stroke-width="1.9"/><path d="M6.2,3.4c1.4,0 1.8,.6 1.8,1.8v1.6c0,.8 .4,1.2 1.2,1.4c-.8,.2 -1.2,.6 -1.2,1.4v1.6c0,1.2 -.4,1.8 -1.8,1.8" fill="none" stroke="#000" stroke-width="1.9"/><path d="M0.6,1.4h9.4c2.4,0 3,1.4 3,3.4v1.6" fill="none" stroke="#10108c" stroke-width="1.2"/><path d="M10.6,6l2.4,3l2.4,-3z" fill="#10108c"/></svg>
<svg style="left:794.50px;top:50px" width="16" height="17" viewBox="0 0 16 17"><path d="M4.2,1.6c-1.4,0 -1.8,.6 -1.8,1.8v1.6c0,.8 -.4,1.2 -1.2,1.4c.8,.2 1.2,.6 1.2,1.4v1.6c0,1.2 .4,1.8 1.8,1.8" fill="none" stroke="#000" stroke-width="1.9"/><path d="M5.8,1.6c1.4,0 1.8,.6 1.8,1.8v1.6c0,.8 .4,1.2 1.2,1.4c-.8,.2 -1.2,.6 -1.2,1.4v1.6c0,1.2 -.4,1.8 -1.8,1.8" fill="none" stroke="#000" stroke-width="1.9"/><path d="M0.4,14.6h9.6c2.4,0 3,-1.4 3,-3.4v-2" fill="none" stroke="#10108c" stroke-width="1.2"/><path d="M10.6,9.6l2.4,-3l2.4,3z" fill="#10108c"/></svg>
<svg style="left:817.50px;top:50px" width="16" height="17" viewBox="0 0 16 17"><path d="M9,3.4c-1.4,0 -1.8,.6 -1.8,1.8v1.6c0,.8 -.4,1.2 -1.2,1.4c.8,.2 1.2,.6 1.2,1.4v1.6c0,1.2 .4,1.8 1.8,1.8" fill="none" stroke="#000" stroke-width="1.9"/><path d="M12,3.4c1.4,0 1.8,.6 1.8,1.8v1.6c0,.8 .4,1.2 1.2,1.4c-.8,.2 -1.2,.6 -1.2,1.4v1.6c0,1.2 -.4,1.8 -1.8,1.8" fill="none" stroke="#000" stroke-width="1.9"/><path d="M0.4,5.6h4.6" stroke="#10108c" stroke-width="1.3"/><path d="M4,3.2l2.8,2.4l-2.8,2.4z" fill="#10108c"/></svg>
<svg style="left:848.00px;top:50px" width="16" height="17" viewBox="0 0 16 17"><path d="M4.4,8.6v-5.2a1,1 0 0 1 2,0v-1.2a1,1 0 0 1 2,0v.8a1,1 0 0 1 2,0v1.2a1,1 0 0 1 2,0v6.2c0,2.6 -1,4.2 -2.4,5h-4.4c-1.4,-.8 -2.6,-2.8 -4.4,-5.6c-.6,-1 .6,-1.8 1.4,-1z" fill="#fff" stroke="#000" stroke-width="1.1"/><path d="M6.4,3.4v4.6M8.4,3v5M10.4,4.2v4" stroke="#000" stroke-width=".9"/></svg>
<svg style="left:870.50px;top:50px" width="16" height="17" viewBox="0 0 16 17"><g transform="translate(-1.4,-.6) scale(.86)"><path d="M4.4,8.6v-5.2a1,1 0 0 1 2,0v-1.2a1,1 0 0 1 2,0v.8a1,1 0 0 1 2,0v1.2a1,1 0 0 1 2,0v6.2c0,2.6 -1,4.2 -2.4,5h-4.4c-1.4,-.8 -2.6,-2.8 -4.4,-5.6c-.6,-1 .6,-1.8 1.4,-1z" fill="#fff" stroke="#000" stroke-width="1.1"/><path d="M6.4,3.4v4.6M8.4,3v5M10.4,4.2v4" stroke="#000" stroke-width=".9"/></g><g transform="translate(3,.8) scale(.86)"><path d="M4.4,8.6v-5.2a1,1 0 0 1 2,0v-1.2a1,1 0 0 1 2,0v.8a1,1 0 0 1 2,0v1.2a1,1 0 0 1 2,0v6.2c0,2.6 -1,4.2 -2.4,5h-4.4c-1.4,-.8 -2.6,-2.8 -4.4,-5.6c-.6,-1 .6,-1.8 1.4,-1z" fill="#fff" stroke="#000" stroke-width="1.1"/><path d="M6.4,3.4v4.6M8.4,3v5M10.4,4.2v4" stroke="#000" stroke-width=".9"/></g><path d="M3,15.4l7.6,-8.4M3.6,8.6l7.4,5.8" stroke="#8c0a0a" stroke-width="1.6"/></svg>
<svg style="left:895.00px;top:50px" width="16" height="17" viewBox="0 0 16 17"><rect x="0.5" y="1" width="8.8" height="13.6" fill="#fff" stroke="#9a9a9a" stroke-width="1"/><path d="M2,3.5h3.6M3,5.5h4.6M3,7.5h4.6M3,9.5h4.6M3,11.5h3.6" stroke="#10108c" stroke-width="1"/><rect x="10.2" y="7" width="2" height="6.4" fill="#10108c"/><rect x="13.4" y="7" width="2" height="6.4" fill="#10108c"/></svg>
<div style="position:absolute;left:0px;top:94px;width:398px;height:572px;background:#fff;border:1px solid #dadada;border-left-color:#c8c8c8"></div>
<div style="position:absolute;left:0px;top:74px;width:50px;height:22px;background:#fff;border:1px solid #dadada;border-bottom:none;border-left-color:#c8c8c8"></div>
<div style="position:absolute;left:50px;top:76px;width:63px;height:19px;background:#f0f0f0;border:1px solid #dadada;border-left:none"></div>
<div style="position:absolute;left:113px;top:76px;width:55px;height:19px;background:#f0f0f0;border:1px solid #dadada;border-left:none"></div>
<div style="position:absolute;left:7.80px;top:76.10px;height:16px;line-height:16px;font-size:11.3px;letter-spacing:-0.179px;color:#000;white-space:pre;font-weight:400;font-family:'Liberation Sans',sans-serif;">Project</div>
<div style="position:absolute;left:53.60px;top:77.50px;height:16px;line-height:16px;font-size:11.3px;letter-spacing:-0.456px;color:#000;white-space:pre;font-weight:400;font-family:'Liberation Sans',sans-serif;">Peripherals</div>
<div style="position:absolute;left:118.50px;top:77.50px;height:16px;line-height:16px;font-size:11.3px;letter-spacing:-0.340px;color:#000;white-space:pre;font-weight:400;font-family:'Liberation Sans',sans-serif;">Registers</div>
<div style="position:absolute;left:4px;top:98px;width:392px;height:565px;background:#fff;border:1px solid #858585"></div>
<div style="position:absolute;left:36px;top:118px;width:1px;height:406px;background:repeating-linear-gradient(180deg,#808080 0 1px,transparent 1px 2px)"></div>
<div style="position:absolute;left:55px;top:136px;width:1px;height:82px;background:repeating-linear-gradient(180deg,#808080 0 1px,transparent 1px 2px)"></div>
<div style="position:absolute;left:74px;top:154px;width:1px;height:46px;background:repeating-linear-gradient(180deg,#808080 0 1px,transparent 1px 2px)"></div>
<div style="position:absolute;left:55px;top:244px;width:1px;height:28px;background:repeating-linear-gradient(180deg,#808080 0 1px,transparent 1px 2px)"></div>
<div style="position:absolute;left:55px;top:370px;width:1px;height:10px;background:repeating-linear-gradient(180deg,#808080 0 1px,transparent 1px 2px)"></div>
<div style="position:absolute;left:55px;top:406px;width:1px;height:82px;background:repeating-linear-gradient(180deg,#808080 0 1px,transparent 1px 2px)"></div>
<div style="position:absolute;left:74px;top:424px;width:1px;height:10px;background:repeating-linear-gradient(180deg,#808080 0 1px,transparent 1px 2px)"></div>
<div style="position:absolute;left:74px;top:460px;width:1px;height:10px;background:repeating-linear-gradient(180deg,#808080 0 1px,transparent 1px 2px)"></div>
<div style="position:absolute;left:74px;top:496px;width:1px;height:10px;background:repeating-linear-gradient(180deg,#808080 0 1px,transparent 1px 2px)"></div>
<div style="position:absolute;left:55px;top:532px;width:1px;height:82px;background:repeating-linear-gradient(180deg,#808080 0 1px,transparent 1px 2px)"></div>
<div style="position:absolute;left:23px;top:109px;width:4px;height:1px;background:repeating-linear-gradient(90deg,#808080 0 1px,transparent 1px 2px)"></div>
<div style="position:absolute;left:10px;top:101px;width:13px;height:17px;background:#fff"></div>
<svg style="left:10.5px;top:104.8px" width="12" height="10" viewBox="0 0 12 10"><path d="M2,2.7l4,4.1l4,-4.1" fill="none" stroke="#444" stroke-width="1.8"/></svg>
<svg style="left:28px;top:101px" width="16" height="17" viewBox="0 0 16 17"><ellipse cx="4.6" cy="10.6" rx="3.8" ry="3.4" fill="#d0d0d8" stroke="#888" stroke-width=".6"/><path d="M5,14.6l2.6,-6.6l2.4,3.6l-2.6,3.4z" fill="#1c1c9c"/><path d="M10.4,9.4l4.6,-2.4v6l-4,2.4z" fill="#9c1414"/><path d="M10.4,9.4l-1,5.4l1.6,.6" fill="#c83030"/><circle cx="7.8" cy="5.2" r="4.2" fill="#ffff10" stroke="#c8c800" stroke-width=".5"/><path d="M11.4,2.6v6" stroke="#000" stroke-width="1"/><path d="M5.4,1l2.4,-.6" stroke="#000" stroke-width=".8"/></svg>
<div class="m" style="position:absolute;left:49px;top:101.1px;height:18px;line-height:18px;color:#262626">gpio.prj</div>
<div style="position:absolute;left:42px;top:127px;width:4px;height:1px;background:repeating-linear-gradient(90deg,#808080 0 1px,transparent 1px 2px)"></div>
<div style="position:absolute;left:29px;top:119px;width:13px;height:17px;background:#fff"></div>
<svg style="left:29.5px;top:122.8px" width="12" height="10" viewBox="0 0 12 10"><path d="M2,2.7l4,4.1l4,-4.1" fill="none" stroke="#444" stroke-width="1.8"/></svg>
<svg style="left:47px;top:119px" width="16" height="17" viewBox="0 0 16 17"><rect x="0" y="0" width="16" height="16" fill="#c4c4c4"/><rect x="2.4" y="2.6" width="11.6" height="10" fill="#a8c4ac" stroke="#2a4a32" stroke-width="1"/><rect x="2.9" y="3.1" width="10.6" height="2" fill="#7c8c84"/><path d="M6.8,5.4c-.6,1.2 -1.2,2.2 -1.4,3.8l2.6,1.2l.4,-3z" fill="#7a5030"/><path d="M1.2,13.8l3.4,-3.6l2.6,-.6l1.8,1.6l-1.2,2.4l-3.2,1.6z" fill="#f4d48c" stroke="#a87c2c" stroke-width=".6"/></svg>
<div class="m" style="position:absolute;left:68px;top:119.1px;height:18px;line-height:18px;color:#262626">Public</div>
<div style="position:absolute;left:61px;top:145px;width:4px;height:1px;background:repeating-linear-gradient(90deg,#808080 0 1px,transparent 1px 2px)"></div>
<div style="position:absolute;left:48px;top:137px;width:13px;height:17px;background:#fff"></div>
<svg style="left:48.5px;top:140.8px" width="12" height="10" viewBox="0 0 12 10"><path d="M2,2.7l4,4.1l4,-4.1" fill="none" stroke="#444" stroke-width="1.8"/></svg>
<svg style="left:66px;top:137px" width="16" height="17" viewBox="0 0 16 17"><path d="M0.6,3.4l4.4,-1.2l1.2,1.6l4.4,-3.4l1.4,1.2l-4.4,12.6z" fill="#f4e478" stroke="#6a5a00" stroke-width=".8"/><path d="M1.2,4l5.2,10.6" stroke="#000" stroke-width="1.2"/><path d="M6.4,7.4l9.2,-4.6v8l-9.2,4.6z" fill="#d8c420" stroke="#2a2400" stroke-width="1.1"/><path d="M2.4,4l2.6,-.8l1.2,1.6l3.6,-2.8" stroke="#fffbd0" stroke-width=".8" fill="none"/></svg>
<div class="m" style="position:absolute;left:87px;top:137.1px;height:18px;line-height:18px;color:#262626">C Files</div>
<div style="position:absolute;left:74px;top:163px;width:11px;height:1px;background:repeating-linear-gradient(90deg,#808080 0 1px,transparent 1px 2px)"></div>
<div style="position:absolute;left:85px;top:156px;width:13px;height:13px;background:#fff;border:1px solid #333"></div>
<svg style="left:100px;top:155px" width="13" height="17" viewBox="0 0 13 17"><path d="M0,14.5h11.5v-11l-3,-3" fill="none" stroke="#000" stroke-width="1.1"/><path d="M8.5,.5v3h3" fill="none" stroke="#666" stroke-width=".7"/><text x="2" y="12.4" font-family="Liberation Sans" font-weight="bold" font-size="10" fill="#10106c">C</text></svg>
<div class="m" style="position:absolute;left:119px;top:155.1px;height:18px;line-height:18px;color:#262626">User\ch32v00x_it.c</div>
<div style="position:absolute;left:74px;top:181px;width:11px;height:1px;background:repeating-linear-gradient(90deg,#808080 0 1px,transparent 1px 2px)"></div>
<div style="position:absolute;left:85px;top:174px;width:13px;height:13px;background:#fff;border:1px solid #333"></div>
<svg style="left:100px;top:173px" width="13" height="17" viewBox="0 0 13 17"><path d="M0,14.5h11.5v-11l-3,-3" fill="none" stroke="#000" stroke-width="1.1"/><path d="M8.5,.5v3h3" fill="none" stroke="#666" stroke-width=".7"/><text x="2" y="12.4" font-family="Liberation Sans" font-weight="bold" font-size="10" fill="#10106c">C</text></svg>
<div class="m" style="position:absolute;left:119px;top:173.1px;height:18px;line-height:18px;color:#262626">User\main.c</div>
<div style="position:absolute;left:74px;top:199px;width:11px;height:1px;background:repeating-linear-gradient(90deg,#808080 0 1px,transparent 1px 2px)"></div>
<div style="position:absolute;left:85px;top:192px;width:13px;height:13px;background:#fff;border:1px solid #333"></div>
<svg style="left:100px;top:191px" width="13" height="17" viewBox="0 0 13 17"><path d="M0,14.5h11.5v-11l-3,-3" fill="none" stroke="#000" stroke-width="1.1"/><path d="M8.5,.5v3h3" fill="none" stroke="#666" stroke-width=".7"/><text x="2" y="12.4" font-family="Liberation Sans" font-weight="bold" font-size="10" fill="#10106c">C</text></svg>
<div class="m" style="position:absolute;left:119px;top:191.1px;height:18px;line-height:18px;color:#262626">User\system_ch32v00x.c</div>
<div style="position:absolute;left:61px;top:217px;width:4px;height:1px;background:repeating-linear-gradient(90deg,#808080 0 1px,transparent 1px 2px)"></div>
<div style="position:absolute;left:48px;top:209px;width:13px;height:17px;background:#fff"></div>
<svg style="left:49.5px;top:211.5px" width="10" height="12" viewBox="0 0 10 12"><path d="M3.3,2l4.1,4l-4.1,4" fill="none" stroke="#a6a6a6" stroke-width="1.5"/></svg>
<svg style="left:66px;top:209px" width="16" height="17" viewBox="0 0 16 17"><path d="M0.6,3.4l4.4,-1.2l1.2,1.6l4.4,-3.4l1.4,1.2l-4.4,12.6z" fill="#f4e478" stroke="#6a5a00" stroke-width=".8"/><path d="M1.2,4l5.2,10.6" stroke="#000" stroke-width="1.2"/><path d="M6.4,7.4l9.2,-4.6v8l-9.2,4.6z" fill="#d8c420" stroke="#2a2400" stroke-width="1.1"/><path d="M2.4,4l2.6,-.8l1.2,1.6l3.6,-2.8" stroke="#fffbd0" stroke-width=".8" fill="none"/></svg>
<div class="m" style="position:absolute;left:87px;top:209.1px;height:18px;line-height:18px;color:#262626">Header</div>
<div style="position:absolute;left:42px;top:235px;width:4px;height:1px;background:repeating-linear-gradient(90deg,#808080 0 1px,transparent 1px 2px)"></div>
<div style="position:absolute;left:29px;top:227px;width:13px;height:17px;background:#fff"></div>
<svg style="left:29.5px;top:230.8px" width="12" height="10" viewBox="0 0 12 10"><path d="M2,2.7l4,4.1l4,-4.1" fill="none" stroke="#444" stroke-width="1.8"/></svg>
<svg style="left:47px;top:227px" width="16" height="17" viewBox="0 0 16 17"><rect x="0" y="0" width="16" height="16" fill="#c4c4c4"/><rect x="2.4" y="2.6" width="11.6" height="10" fill="#a8c4ac" stroke="#2a4a32" stroke-width="1"/><rect x="2.9" y="3.1" width="10.6" height="2" fill="#7c8c84"/><path d="M6.8,5.4c-.6,1.2 -1.2,2.2 -1.4,3.8l2.6,1.2l.4,-3z" fill="#7a5030"/><path d="M1.2,13.8l3.4,-3.6l2.6,-.6l1.8,1.6l-1.2,2.4l-3.2,1.6z" fill="#f4d48c" stroke="#a87c2c" stroke-width=".6"/></svg>
<div class="m" style="position:absolute;left:68px;top:227.1px;height:18px;line-height:18px;color:#262626">Protect</div>
<div style="position:absolute;left:61px;top:253px;width:4px;height:1px;background:repeating-linear-gradient(90deg,#808080 0 1px,transparent 1px 2px)"></div>
<div style="position:absolute;left:48px;top:245px;width:13px;height:17px;background:#fff"></div>
<svg style="left:49.5px;top:247.5px" width="10" height="12" viewBox="0 0 10 12"><path d="M3.3,2l4.1,4l-4.1,4" fill="none" stroke="#a6a6a6" stroke-width="1.5"/></svg>
<svg style="left:66px;top:245px" width="16" height="17" viewBox="0 0 16 17"><path d="M0.6,3.4l4.4,-1.2l1.2,1.6l4.4,-3.4l1.4,1.2l-4.4,12.6z" fill="#f4e478" stroke="#6a5a00" stroke-width=".8"/><path d="M1.2,4l5.2,10.6" stroke="#000" stroke-width="1.2"/><path d="M6.4,7.4l9.2,-4.6v8l-9.2,4.6z" fill="#d8c420" stroke="#2a2400" stroke-width="1.1"/><path d="M2.4,4l2.6,-.8l1.2,1.6l3.6,-2.8" stroke="#fffbd0" stroke-width=".8" fill="none"/></svg>
<div class="m" style="position:absolute;left:87px;top:245.1px;height:18px;line-height:18px;color:#262626">C Files</div>
<div style="position:absolute;left:61px;top:271px;width:4px;height:1px;background:repeating-linear-gradient(90deg,#808080 0 1px,transparent 1px 2px)"></div>
<div style="position:absolute;left:48px;top:263px;width:13px;height:17px;background:#fff"></div>
<svg style="left:49.5px;top:265.5px" width="10" height="12" viewBox="0 0 10 12"><path d="M3.3,2l4.1,4l-4.1,4" fill="none" stroke="#a6a6a6" stroke-width="1.5"/></svg>
<svg style="left:66px;top:263px" width="16" height="17" viewBox="0 0 16 17"><path d="M0.6,3.4l4.4,-1.2l1.2,1.6l4.4,-3.4l1.4,1.2l-4.4,12.6z" fill="#f4e478" stroke="#6a5a00" stroke-width=".8"/><path d="M1.2,4l5.2,10.6" stroke="#000" stroke-width="1.2"/><path d="M6.4,7.4l9.2,-4.6v8l-9.2,4.6z" fill="#d8c420" stroke="#2a2400" stroke-width="1.1"/><path d="M2.4,4l2.6,-.8l1.2,1.6l3.6,-2.8" stroke="#fffbd0" stroke-width=".8" fill="none"/></svg>
<div class="m" style="position:absolute;left:87px;top:263.1px;height:18px;line-height:18px;color:#262626">Header</div>
<div style="position:absolute;left:42px;top:289px;width:4px;height:1px;background:repeating-linear-gradient(90deg,#808080 0 1px,transparent 1px 2px)"></div>
<div style="position:absolute;left:29px;top:281px;width:13px;height:17px;background:#fff"></div>
<svg style="left:30.5px;top:283.5px" width="10" height="12" viewBox="0 0 10 12"><path d="M3.3,2l4.1,4l-4.1,4" fill="none" stroke="#a6a6a6" stroke-width="1.5"/></svg>
<svg style="left:47px;top:281px" width="16" height="17" viewBox="0 0 16 17"><path d="M0.6,3.4l4.4,-1.2l1.2,1.6l4.4,-3.4l1.4,1.2l-4.4,12.6z" fill="#f4e478" stroke="#6a5a00" stroke-width=".8"/><path d="M1.2,4l5.2,10.6" stroke="#000" stroke-width="1.2"/><path d="M6.4,7.4l9.2,-4.6v8l-9.2,4.6z" fill="#d8c420" stroke="#2a2400" stroke-width="1.1"/><path d="M2.4,4l2.6,-.8l1.2,1.6l3.6,-2.8" stroke="#fffbd0" stroke-width=".8" fill="none"/></svg>
<div class="m" style="position:absolute;left:68px;top:281.1px;height:18px;line-height:18px;color:#262626">Asm Files</div>
<div style="position:absolute;left:36px;top:307px;width:10px;height:1px;background:repeating-linear-gradient(90deg,#808080 0 1px,transparent 1px 2px)"></div>
<svg style="left:47px;top:299px" width="16" height="17" viewBox="0 0 16 17"><path d="M0.6,3.4l4.4,-1.2l1.2,1.6l4.4,-3.4l1.4,1.2l-4.4,12.6z" fill="#f4e478" stroke="#6a5a00" stroke-width=".8"/><path d="M1.2,4l5.2,10.6" stroke="#000" stroke-width="1.2"/><path d="M6.4,7.4l9.2,-4.6v8l-9.2,4.6z" fill="#d8c420" stroke="#2a2400" stroke-width="1.1"/><path d="M2.4,4l2.6,-.8l1.2,1.6l3.6,-2.8" stroke="#fffbd0" stroke-width=".8" fill="none"/></svg>
<div class="m" style="position:absolute;left:68px;top:299.1px;height:18px;line-height:18px;color:#262626">Lib Files</div>
<div style="position:absolute;left:42px;top:325px;width:4px;height:1px;background:repeating-linear-gradient(90deg,#808080 0 1px,transparent 1px 2px)"></div>
<div style="position:absolute;left:29px;top:317px;width:13px;height:17px;background:#fff"></div>
<svg style="left:30.5px;top:319.5px" width="10" height="12" viewBox="0 0 10 12"><path d="M3.3,2l4.1,4l-4.1,4" fill="none" stroke="#a6a6a6" stroke-width="1.5"/></svg>
<svg style="left:47px;top:317px" width="16" height="17" viewBox="0 0 16 17"><path d="M0.6,3.4l4.4,-1.2l1.2,1.6l4.4,-3.4l1.4,1.2l-4.4,12.6z" fill="#f4e478" stroke="#6a5a00" stroke-width=".8"/><path d="M1.2,4l5.2,10.6" stroke="#000" stroke-width="1.2"/><path d="M6.4,7.4l9.2,-4.6v8l-9.2,4.6z" fill="#d8c420" stroke="#2a2400" stroke-width="1.1"/><path d="M2.4,4l2.6,-.8l1.2,1.6l3.6,-2.8" stroke="#fffbd0" stroke-width=".8" fill="none"/></svg>
<div class="m" style="position:absolute;left:68px;top:317.1px;height:18px;line-height:18px;color:#262626">ld Files</div>
<div style="position:absolute;left:36px;top:343px;width:10px;height:1px;background:repeating-linear-gradient(90deg,#808080 0 1px,transparent 1px 2px)"></div>
<svg style="left:47px;top:335px" width="16" height="17" viewBox="0 0 16 17"><path d="M0.6,3.4l4.4,-1.2l1.2,1.6l4.4,-3.4l1.4,1.2l-4.4,12.6z" fill="#f4e478" stroke="#6a5a00" stroke-width=".8"/><path d="M1.2,4l5.2,10.6" stroke="#000" stroke-width="1.2"/><path d="M6.4,7.4l9.2,-4.6v8l-9.2,4.6z" fill="#d8c420" stroke="#2a2400" stroke-width="1.1"/><path d="M2.4,4l2.6,-.8l1.2,1.6l3.6,-2.8" stroke="#fffbd0" stroke-width=".8" fill="none"/></svg>
<div class="m" style="position:absolute;left:68px;top:335.1px;height:18px;line-height:18px;color:#262626">Other Files</div>
<div style="position:absolute;left:42px;top:361px;width:4px;height:1px;background:repeating-linear-gradient(90deg,#808080 0 1px,transparent 1px 2px)"></div>
<div style="position:absolute;left:29px;top:353px;width:13px;height:17px;background:#fff"></div>
<svg style="left:29.5px;top:356.8px" width="12" height="10" viewBox="0 0 12 10"><path d="M2,2.7l4,4.1l4,-4.1" fill="none" stroke="#444" stroke-width="1.8"/></svg>
<svg style="left:47px;top:353px" width="16" height="17" viewBox="0 0 16 17"><path d="M0.6,3.4l4.4,-1.2l1.2,1.6l4.4,-3.4l1.4,1.2l-4.4,12.6z" fill="#f4e478" stroke="#6a5a00" stroke-width=".8"/><path d="M1.2,4l5.2,10.6" stroke="#000" stroke-width="1.2"/><path d="M6.4,7.4l9.2,-4.6v8l-9.2,4.6z" fill="#d8c420" stroke="#2a2400" stroke-width="1.1"/><path d="M2.4,4l2.6,-.8l1.2,1.6l3.6,-2.8" stroke="#fffbd0" stroke-width=".8" fill="none"/></svg>
<div class="m" style="position:absolute;left:68px;top:353.1px;height:18px;line-height:18px;color:#262626">OutPut Name</div>
<div style="position:absolute;left:55px;top:379px;width:10px;height:1px;background:repeating-linear-gradient(90deg,#808080 0 1px,transparent 1px 2px)"></div>
<svg style="left:66px;top:371px" width="16" height="17" viewBox="0 0 16 17"><path d="M0,14.5h12.5v-11l-3,-3" fill="none" stroke="#000" stroke-width="1.1"/><path d="M9.5,.5v3h3" fill="none" stroke="#666" stroke-width=".7"/><ellipse cx="5.6" cy="7.4" rx="2.7" ry="2.5" fill="none" stroke="#10106c" stroke-width="2"/></svg>
<div class="m" style="position:absolute;left:87px;top:371.1px;height:18px;line-height:18px;color:#262626">gpio</div>
<div style="position:absolute;left:42px;top:397px;width:4px;height:1px;background:repeating-linear-gradient(90deg,#808080 0 1px,transparent 1px 2px)"></div>
<div style="position:absolute;left:29px;top:389px;width:13px;height:17px;background:#fff"></div>
<svg style="left:29.5px;top:392.8px" width="12" height="10" viewBox="0 0 12 10"><path d="M2,2.7l4,4.1l4,-4.1" fill="none" stroke="#444" stroke-width="1.8"/></svg>
<svg style="left:47px;top:389px" width="16" height="17" viewBox="0 0 16 17"><circle cx="7.4" cy="7.6" r="6.8" fill="#fff" stroke="#000" stroke-width="1.1"/><path d="M2,9.6l3.6,-5.4l3,6.8l-4,1.6z" fill="#e89090" stroke="#803030" stroke-width=".5"/><path d="M5.6,4.2l3,6.8" stroke="#a04040" stroke-width=".8"/><circle cx="11.8" cy="4.6" r="2.8" fill="#1c3ca0"/><path d="M11,3.4c1,-.8 2,0 1.2,1.2l-.6,.8" stroke="#9ab0f0" stroke-width=".8" fill="none"/><circle cx="12.6" cy="12.6" r="3.2" fill="#7ca07c" stroke="#000" stroke-width=".9"/><circle cx="11.8" cy="11.8" r="1.2" fill="#b8d0b8"/></svg>
<div class="m" style="position:absolute;left:68px;top:389.1px;height:18px;line-height:18px;color:#262626">Target</div>
<div style="position:absolute;left:61px;top:415px;width:4px;height:1px;background:repeating-linear-gradient(90deg,#808080 0 1px,transparent 1px 2px)"></div>
<div style="position:absolute;left:48px;top:407px;width:13px;height:17px;background:#fff"></div>
<svg style="left:48.5px;top:410.8px" width="12" height="10" viewBox="0 0 12 10"><path d="M2,2.7l4,4.1l4,-4.1" fill="none" stroke="#444" stroke-width="1.8"/></svg>
<svg style="left:66px;top:407px" width="16" height="17" viewBox="0 0 16 17"><rect x="4.6" y="1" width="6.8" height="14" fill="#000"/><path d="M3.8,2.4h8.4M3.8,4.4h8.4M3.8,6.4h8.4M3.8,8.4h8.4M3.8,10.4h8.4M3.8,12.4h8.4" stroke="#000" stroke-width="1" stroke-dasharray=".8,.0"/><path d="M6.4,5.6l3.2,-1M6.4,8.6l3.2,-1.4M6.6,9.6h3M6.6,11.6l3,-1" stroke="#ddd" stroke-width=".7"/></svg>
<div class="m" style="position:absolute;left:87px;top:407.1px;height:18px;line-height:18px;color:#262626">CPU</div>
<div style="position:absolute;left:74px;top:433px;width:10px;height:1px;background:repeating-linear-gradient(90deg,#808080 0 1px,transparent 1px 2px)"></div>
<div style="position:absolute;left:83px;top:424px;width:107px;height:18px;background:#b6d5ba"></div>
<svg style="left:85px;top:425px" width="16" height="17" viewBox="0 0 16 17"><path d="M0.6,8l9.6,-5l5,3.6l-9.8,5z" fill="#c0c0c0" stroke="#9a9a9a" stroke-width=".6"/><path d="M10.2,3l5,3.6" stroke="#000" stroke-width=".9"/><path d="M0.6,8l4.8,3.6v1.6l-4.8,-3.6z" fill="#8a8a8a"/><path d="M5.4,11.6l9.8,-5v3l-9.8,5z" fill="#000"/><path d="M6.6,14.2v1.2M8.6,13.2v1.2M10.6,12.2v1.2M12.6,11.2v1.2" stroke="#000" stroke-width="1"/></svg>
<div class="m" style="position:absolute;left:106px;top:425.1px;height:18px;line-height:18px;color:#d63a2c">CH32V003xx</div>
<div style="position:absolute;left:61px;top:451px;width:4px;height:1px;background:repeating-linear-gradient(90deg,#808080 0 1px,transparent 1px 2px)"></div>
<div style="position:absolute;left:48px;top:443px;width:13px;height:17px;background:#fff"></div>
<svg style="left:48.5px;top:446.8px" width="12" height="10" viewBox="0 0 12 10"><path d="M2,2.7l4,4.1l4,-4.1" fill="none" stroke="#444" stroke-width="1.8"/></svg>
<svg style="left:66px;top:443px" width="16" height="17" viewBox="0 0 16 17"><path d="M1.4,10l7.6,-5.4l5.6,3.2l-7.4,6.6z" fill="#fff" stroke="#333" stroke-width=".8" stroke-dasharray="1.4,.9"/><path d="M14.6,7.8l-7.4,6.6l-5.8,-4.4" fill="none" stroke="#222" stroke-width="1"/><path d="M1.6,0.6l4,2.4l1.2,-1.2l1.6,5.6l1.4,-1l-.8,4.8l-4.8,-1.6l1.6,-1l-4,-3.4l1.8,-.6z" fill="#e83818"/><path d="M2.6,1.8l3,2.6l.6,-1.2l1.2,4" stroke="#ffb060" stroke-width=".7" fill="none"/></svg>
<div class="m" style="position:absolute;left:87px;top:443.1px;height:18px;line-height:18px;color:#262626">Output Files</div>
<div style="position:absolute;left:74px;top:469px;width:10px;height:1px;background:repeating-linear-gradient(90deg,#808080 0 1px,transparent 1px 2px)"></div>
<div style="position:absolute;left:83px;top:460px;width:163px;height:18px;background:#b6d5ba"></div>
<svg style="left:85px;top:461px" width="16" height="17" viewBox="0 0 16 17"><path d="M0.6,8.4l7.4,-4.4l7.4,4l-7.6,4.6z" fill="#000"/><path d="M0.6,8.4l7.2,4.2v2.6l-7.2,-4.2z" fill="#e8e840"/><path d="M7.8,12.6l7.6,-4.6v2.6l-7.6,4.6z" fill="#f4f460"/><path d="M2,10v2.4M4,11.2v2.4M6,12.4v2.4M9.6,12v2.4M11.6,10.8v2.4M13.6,9.6v2.4" stroke="#8a8a00" stroke-width=".7"/><path d="M6,6.6c1,-1.2 3.4,-1 3,.4c-.2,.8 -1.4,.8 -1.4,1.8M10.2,7c1,.2 1.4,1.2 .2,1.8" stroke="#fff" stroke-width="1.1" fill="none"/></svg>
<div class="m" style="position:absolute;left:106px;top:461.1px;height:18px;line-height:18px;color:#d63a2c">Output: Intel Hex</div>
<div style="position:absolute;left:61px;top:487px;width:4px;height:1px;background:repeating-linear-gradient(90deg,#808080 0 1px,transparent 1px 2px)"></div>
<div style="position:absolute;left:48px;top:479px;width:13px;height:17px;background:#fff"></div>
<svg style="left:48.5px;top:482.8px" width="12" height="10" viewBox="0 0 12 10"><path d="M2,2.7l4,4.1l4,-4.1" fill="none" stroke="#444" stroke-width="1.8"/></svg>
<svg style="left:66px;top:479px" width="16" height="17" viewBox="0 0 16 17"><path d="M0.6,8h14.8M3,2.6l10,10.8M13,2.6l-10,10.8" stroke="#2a3a5a" stroke-width=".8" stroke-dasharray="1.2,.8"/><ellipse cx="7.2" cy="8.6" rx="4.4" ry="4.2" fill="#1820a0"/><path d="M5.6,8.6c1.4,1.4 3,1 3.6,-.6" stroke="#fff" stroke-width="1.2" fill="none"/><rect x="10.8" y="1" width="1.6" height="14" fill="#50c8e0"/><path d="M3.4,1.4l1.2,3.2" stroke="#8090a0" stroke-width="1"/></svg>
<div class="m" style="position:absolute;left:87px;top:479.1px;height:18px;line-height:18px;color:#262626">Optimization</div>
<div style="position:absolute;left:74px;top:505px;width:10px;height:1px;background:repeating-linear-gradient(90deg,#808080 0 1px,transparent 1px 2px)"></div>
<div style="position:absolute;left:83px;top:496px;width:179px;height:18px;background:#b6d5ba"></div>
<svg style="left:85px;top:497px" width="16" height="17" viewBox="0 0 16 17"><path d="M5.6,3.6h4.8l1.2,3.2h4.2l-7.8,6l-7.8,-6h4.2z" fill="#8c0c0c"/><path d="M6.2,3.8h3.6" stroke="#e08080" stroke-width=".9"/><path d="M0.4,6.8l7.6,6l7.6,-6" stroke="#400000" stroke-width=".8" fill="none"/></svg>
<div class="m" style="position:absolute;left:106px;top:497.1px;height:18px;line-height:18px;color:#d63a2c">Optimize size (-Os)</div>
<div style="position:absolute;left:42px;top:523px;width:4px;height:1px;background:repeating-linear-gradient(90deg,#808080 0 1px,transparent 1px 2px)"></div>
<div style="position:absolute;left:29px;top:515px;width:13px;height:17px;background:#fff"></div>
<svg style="left:29.5px;top:518.8px" width="12" height="10" viewBox="0 0 12 10"><path d="M2,2.7l4,4.1l4,-4.1" fill="none" stroke="#444" stroke-width="1.8"/></svg>
<svg style="left:47px;top:515px" width="16" height="17" viewBox="0 0 16 17"><rect x="0" y="0" width="16" height="16" fill="#c4c4c4"/><rect x="2.4" y="2.6" width="11.6" height="10" fill="#a8c4ac" stroke="#2a4a32" stroke-width="1"/><rect x="2.9" y="3.1" width="10.6" height="2" fill="#7c8c84"/><path d="M6.8,5.4c-.6,1.2 -1.2,2.2 -1.4,3.8l2.6,1.2l.4,-3z" fill="#7a5030"/><path d="M1.2,13.8l3.4,-3.6l2.6,-.6l1.8,1.6l-1.2,2.4l-3.2,1.6z" fill="#f4d48c" stroke="#a87c2c" stroke-width=".6"/></svg>
<div class="m" style="position:absolute;left:68px;top:515.1px;height:18px;line-height:18px;color:#262626">Running</div>
<div style="position:absolute;left:55px;top:541px;width:10px;height:1px;background:repeating-linear-gradient(90deg,#808080 0 1px,transparent 1px 2px)"></div>
<div style="position:absolute;left:64px;top:532px;width:91px;height:18px;background:#b6d5ba"></div>
<svg style="left:66px;top:533px" width="16" height="17" viewBox="0 0 16 17"><rect x="0" y="0" width="16" height="16" fill="#bccabc"/><rect x="2.4" y="2.6" width="11.6" height="10" fill="#a8c4ac" stroke="#2a4a32" stroke-width="1"/><rect x="2.9" y="3.1" width="10.6" height="2" fill="#7c8c84"/><path d="M6.8,5.4c-.6,1.2 -1.2,2.2 -1.4,3.8l2.6,1.2l.4,-3z" fill="#7a5030"/><path d="M1.2,13.8l3.4,-3.6l2.6,-.6l1.8,1.6l-1.2,2.4l-3.2,1.6z" fill="#f4d48c" stroke="#a87c2c" stroke-width=".6"/></svg>
<div class="m" style="position:absolute;left:87px;top:533.1px;height:18px;line-height:18px;color:#d63a2c">Download</div>
<div style="position:absolute;left:55px;top:559px;width:10px;height:1px;background:repeating-linear-gradient(90deg,#808080 0 1px,transparent 1px 2px)"></div>
<div style="position:absolute;left:64px;top:550px;width:67px;height:18px;background:#b6d5ba"></div>
<svg style="left:66px;top:551px" width="16" height="17" viewBox="0 0 16 17"><rect x="0" y="0" width="16" height="16" fill="#bccabc"/><rect x="2.4" y="2.6" width="11.6" height="10" fill="#a8c4ac" stroke="#2a4a32" stroke-width="1"/><rect x="2.9" y="3.1" width="10.6" height="2" fill="#7c8c84"/><path d="M6.8,5.4c-.6,1.2 -1.2,2.2 -1.4,3.8l2.6,1.2l.4,-3z" fill="#7a5030"/><path d="M1.2,13.8l3.4,-3.6l2.6,-.6l1.8,1.6l-1.2,2.4l-3.2,1.6z" fill="#f4d48c" stroke="#a87c2c" stroke-width=".6"/></svg>
<div class="m" style="position:absolute;left:87px;top:551.1px;height:18px;line-height:18px;color:#d63a2c">Reset</div>
<div style="position:absolute;left:55px;top:577px;width:10px;height:1px;background:repeating-linear-gradient(90deg,#808080 0 1px,transparent 1px 2px)"></div>
<div style="position:absolute;left:64px;top:568px;width:67px;height:18px;background:#b6d5ba"></div>
<svg style="left:66px;top:569px" width="16" height="17" viewBox="0 0 16 17"><rect x="0" y="0" width="16" height="16" fill="#bccabc"/><rect x="2.4" y="2.6" width="11.6" height="10" fill="#a8c4ac" stroke="#2a4a32" stroke-width="1"/><rect x="2.9" y="3.1" width="10.6" height="2" fill="#7c8c84"/><path d="M6.8,5.4c-.6,1.2 -1.2,2.2 -1.4,3.8l2.6,1.2l.4,-3z" fill="#7a5030"/><path d="M1.2,13.8l3.4,-3.6l2.6,-.6l1.8,1.6l-1.2,2.4l-3.2,1.6z" fill="#f4d48c" stroke="#a87c2c" stroke-width=".6"/></svg>
<div class="m" style="position:absolute;left:87px;top:569.1px;height:18px;line-height:18px;color:#d63a2c">ERASE</div>
<div style="position:absolute;left:55px;top:595px;width:10px;height:1px;background:repeating-linear-gradient(90deg,#808080 0 1px,transparent 1px 2px)"></div>
<div style="position:absolute;left:64px;top:586px;width:115px;height:18px;background:#b6d5ba"></div>
<svg style="left:66px;top:587px" width="16" height="17" viewBox="0 0 16 17"><rect x="0" y="0" width="16" height="16" fill="#bccabc"/><rect x="2.4" y="2.6" width="11.6" height="10" fill="#a8c4ac" stroke="#2a4a32" stroke-width="1"/><rect x="2.9" y="3.1" width="10.6" height="2" fill="#7c8c84"/><path d="M6.8,5.4c-.6,1.2 -1.2,2.2 -1.4,3.8l2.6,1.2l.4,-3z" fill="#7a5030"/><path d="M1.2,13.8l3.4,-3.6l2.6,-.6l1.8,1.6l-1.2,2.4l-3.2,1.6z" fill="#f4d48c" stroke="#a87c2c" stroke-width=".6"/></svg>
<div class="m" style="position:absolute;left:87px;top:587.1px;height:18px;line-height:18px;color:#d63a2c">protect off</div>
<div style="position:absolute;left:55px;top:613px;width:10px;height:1px;background:repeating-linear-gradient(90deg,#808080 0 1px,transparent 1px 2px)"></div>
<div style="position:absolute;left:64px;top:604px;width:107px;height:18px;background:#b6d5ba"></div>
<svg style="left:66px;top:605px" width="16" height="17" viewBox="0 0 16 17"><rect x="0" y="0" width="16" height="16" fill="#bccabc"/><rect x="2.4" y="2.6" width="11.6" height="10" fill="#a8c4ac" stroke="#2a4a32" stroke-width="1"/><rect x="2.9" y="3.1" width="10.6" height="2" fill="#7c8c84"/><path d="M6.8,5.4c-.6,1.2 -1.2,2.2 -1.4,3.8l2.6,1.2l.4,-3z" fill="#7a5030"/><path d="M1.2,13.8l3.4,-3.6l2.6,-.6l1.8,1.6l-1.2,2.4l-3.2,1.6z" fill="#f4d48c" stroke="#a87c2c" stroke-width=".6"/></svg>
<div class="m" style="position:absolute;left:87px;top:605.1px;height:18px;line-height:18px;color:#d63a2c">protect on</div>
<div style="position:absolute;left:45px;top:526px;width:136px;height:28px;border:4px solid #e2100e"></div>
<div style="position:absolute;left:403px;top:74px;width:909px;height:593px;background:#fff;border:1px solid #a0a0a0"></div>
<div style="position:absolute;left:404px;top:75px;width:907px;height:591px;border:1px solid #e8e8e8"></div>
<div style="position:absolute;left:405px;top:76px;width:81px;height:590px;background:#f0f0f0"></div>
<div style="position:absolute;left:486px;top:76px;width:2px;height:590px;background:linear-gradient(90deg,#f4f4f4,#fcfcfc)"></div>
<div style="position:absolute;left:1130px;top:76px;width:1px;height:590px;background:#c8c8c8"></div>
<div style="position:absolute;left:1294px;top:76px;width:16px;height:589px;background:#f0f0f0"></div>
<div style="position:absolute;left:1294px;top:325px;width:15px;height:298px;background:#cdcdcd"></div>
<svg style="left:1296px;top:80.6px" width="11" height="8" viewBox="0 0 11 8"><path d="M1.6,6l3.9,-3.9l3.9,3.9" fill="none" stroke="#505050" stroke-width="1.7"/></svg>
<svg style="left:1296px;top:652px" width="11" height="8" viewBox="0 0 11 8"><path d="M1.6,2l3.9,3.9l3.9,-3.9" fill="none" stroke="#505050" stroke-width="1.7"/></svg>
<div style="position:absolute;left:441.40px;top:76.30px;height:16px;line-height:16px;font-size:12.2px;letter-spacing:-0.975px;color:#000;white-space:pre;font-weight:400;font-family:'Liberation Sans',sans-serif;">0029</div>
<div class="m" style="position:absolute;left:490px;top:77.2px;height:16px;line-height:16px;color:#2a2a2a"><span style="color:#3a943a"> * @return  none</span></div>
<div style="position:absolute;left:441.40px;top:92.30px;height:16px;line-height:16px;font-size:12.2px;letter-spacing:-0.975px;color:#000;white-space:pre;font-weight:400;font-family:'Liberation Sans',sans-serif;">0030</div>
<div class="m" style="position:absolute;left:490px;top:93.2px;height:16px;line-height:16px;color:#2a2a2a"><span style="color:#3a943a"> */</span></div>
<div style="position:absolute;left:441.40px;top:108.30px;height:16px;line-height:16px;font-size:12.2px;letter-spacing:-0.975px;color:#000;white-space:pre;font-weight:400;font-family:'Liberation Sans',sans-serif;">0031</div>
<div class="m" style="position:absolute;left:490px;top:109.2px;height:16px;line-height:16px;color:#2a2a2a"><b style="color:#00007c">void</b> GPIO_Toggle_INIT<b>(</b><b style="color:#00007c">void</b><b>)</b></div>
<div style="position:absolute;left:441.40px;top:124.30px;height:16px;line-height:16px;font-size:12.2px;letter-spacing:-0.975px;color:#000;white-space:pre;font-weight:400;font-family:'Liberation Sans',sans-serif;">0032</div>
<svg style="left:422px;top:129px" width="7" height="7" viewBox="0 0 7 7"><path d="M3.5,1.1l2.3,2.4l-2.3,2.4l-2.3,-2.4z" fill="#00008c"/></svg>
<div style="position:absolute;left:478px;top:137px;width:1px;height:3px;background:#808080"></div>
<div style="position:absolute;left:473px;top:126px;width:11px;height:11px;background:#fff;border:1px solid #808080"></div>
<div style="position:absolute;left:475px;top:131px;width:7px;height:1px;background:#404040"></div>
<div class="m" style="position:absolute;left:490px;top:125.2px;height:16px;line-height:16px;color:#2a2a2a"><b>{</b></div>
<div style="position:absolute;left:441.40px;top:140.30px;height:16px;line-height:16px;font-size:12.2px;letter-spacing:-0.975px;color:#000;white-space:pre;font-weight:400;font-family:'Liberation Sans',sans-serif;">0033</div>
<svg style="left:422px;top:145px" width="7" height="7" viewBox="0 0 7 7"><path d="M3.5,1.1l2.3,2.4l-2.3,2.4l-2.3,-2.4z" fill="#00008c"/></svg>
<div style="position:absolute;left:478px;top:140px;width:1px;height:16px;background:#808080"></div>
<div class="m" style="position:absolute;left:490px;top:141.2px;height:16px;line-height:16px;color:#2a2a2a">    GPIO_InitTypeDef GPIO_InitStructure <b>=</b> <b>{</b><span style="color:#e6484c">0</span><b>}</b><b>;</b></div>
<div style="position:absolute;left:441.40px;top:156.30px;height:16px;line-height:16px;font-size:12.2px;letter-spacing:-0.975px;color:#000;white-space:pre;font-weight:400;font-family:'Liberation Sans',sans-serif;">0034</div>
<div style="position:absolute;left:478px;top:156px;width:1px;height:16px;background:#808080"></div>
<div style="position:absolute;left:441.40px;top:172.30px;height:16px;line-height:16px;font-size:12.2px;letter-spacing:-0.975px;color:#000;white-space:pre;font-weight:400;font-family:'Liberation Sans',sans-serif;">0035</div>
<svg style="left:422px;top:177px" width="7" height="7" viewBox="0 0 7 7"><path d="M3.5,1.1l2.3,2.4l-2.3,2.4l-2.3,-2.4z" fill="#00008c"/></svg>
<div style="position:absolute;left:478px;top:172px;width:1px;height:16px;background:#808080"></div>
<div class="m" style="position:absolute;left:490px;top:173.2px;height:16px;line-height:16px;color:#2a2a2a">    RCC_APB2PeriphClockCmd<b>(</b>RCC_APB2Periph_GPIOD<b>,</b> ENABLE<b>)</b><b>;</b></div>
<div style="position:absolute;left:441.40px;top:188.30px;height:16px;line-height:16px;font-size:12.2px;letter-spacing:-0.975px;color:#000;white-space:pre;font-weight:400;font-family:'Liberation Sans',sans-serif;">0036</div>
<svg style="left:422px;top:193px" width="7" height="7" viewBox="0 0 7 7"><path d="M3.5,1.1l2.3,2.4l-2.3,2.4l-2.3,-2.4z" fill="#00008c"/></svg>
<div style="position:absolute;left:478px;top:188px;width:1px;height:16px;background:#808080"></div>
<div class="m" style="position:absolute;left:490px;top:189.2px;height:16px;line-height:16px;color:#2a2a2a">    GPIO_InitStructure<b>.</b>GPIO_Pin <b>=</b> GPIO_Pin_0<b>;</b></div>
<div style="position:absolute;left:441.40px;top:204.30px;height:16px;line-height:16px;font-size:12.2px;letter-spacing:-0.975px;color:#000;white-space:pre;font-weight:400;font-family:'Liberation Sans',sans-serif;">0037</div>
<svg style="left:422px;top:209px" width="7" height="7" viewBox="0 0 7 7"><path d="M3.5,1.1l2.3,2.4l-2.3,2.4l-2.3,-2.4z" fill="#00008c"/></svg>
<div style="position:absolute;left:478px;top:204px;width:1px;height:16px;background:#808080"></div>
<div class="m" style="position:absolute;left:490px;top:205.2px;height:16px;line-height:16px;color:#2a2a2a">    GPIO_InitStructure<b>.</b>GPIO_Mode <b>=</b> GPIO_Mode_Out_PP<b>;</b></div>
<div style="position:absolute;left:441.40px;top:220.30px;height:16px;line-height:16px;font-size:12.2px;letter-spacing:-0.975px;color:#000;white-space:pre;font-weight:400;font-family:'Liberation Sans',sans-serif;">0038</div>
<svg style="left:422px;top:225px" width="7" height="7" viewBox="0 0 7 7"><path d="M3.5,1.1l2.3,2.4l-2.3,2.4l-2.3,-2.4z" fill="#00008c"/></svg>
<div style="position:absolute;left:478px;top:220px;width:1px;height:16px;background:#808080"></div>
<div class="m" style="position:absolute;left:490px;top:221.2px;height:16px;line-height:16px;color:#2a2a2a">    GPIO_InitStructure<b>.</b>GPIO_Speed <b>=</b> GPIO_Speed_50MHz<b>;</b></div>
<div style="position:absolute;left:441.40px;top:236.30px;height:16px;line-height:16px;font-size:12.2px;letter-spacing:-0.975px;color:#000;white-space:pre;font-weight:400;font-family:'Liberation Sans',sans-serif;">0039</div>
<svg style="left:422px;top:241px" width="7" height="7" viewBox="0 0 7 7"><path d="M3.5,1.1l2.3,2.4l-2.3,2.4l-2.3,-2.4z" fill="#00008c"/></svg>
<div style="position:absolute;left:478px;top:236px;width:1px;height:16px;background:#808080"></div>
<div class="m" style="position:absolute;left:490px;top:237.2px;height:16px;line-height:16px;color:#2a2a2a">    GPIO_Init<b>(</b>GPIOD<b>,</b> <b>&amp;</b>GPIO_InitStructure<b>)</b><b>;</b></div>
<div style="position:absolute;left:441.40px;top:252.30px;height:16px;line-height:16px;font-size:12.2px;letter-spacing:-0.975px;color:#000;white-space:pre;font-weight:400;font-family:'Liberation Sans',sans-serif;">0040</div>
<svg style="left:422px;top:257px" width="7" height="7" viewBox="0 0 7 7"><path d="M3.5,1.1l2.3,2.4l-2.3,2.4l-2.3,-2.4z" fill="#00008c"/></svg>
<div style="position:absolute;left:478px;top:252px;width:1px;height:9px;background:#808080"></div>
<div style="position:absolute;left:478px;top:260px;width:6px;height:1px;background:#808080"></div>
<div class="m" style="position:absolute;left:490px;top:253.2px;height:16px;line-height:16px;color:#2a2a2a"><b>}</b></div>
<div style="position:absolute;left:441.40px;top:268.30px;height:16px;line-height:16px;font-size:12.2px;letter-spacing:-0.975px;color:#000;white-space:pre;font-weight:400;font-family:'Liberation Sans',sans-serif;">0041</div>
<div style="position:absolute;left:441.40px;top:284.30px;height:16px;line-height:16px;font-size:12.2px;letter-spacing:-0.975px;color:#000;white-space:pre;font-weight:400;font-family:'Liberation Sans',sans-serif;">0042</div>
<div class="m" style="position:absolute;left:490px;top:285.2px;height:16px;line-height:16px;color:#2a2a2a"><span style="color:#3a943a">/*********************************************************************</span></div>
<div style="position:absolute;left:441.40px;top:300.30px;height:16px;line-height:16px;font-size:12.2px;letter-spacing:-0.975px;color:#000;white-space:pre;font-weight:400;font-family:'Liberation Sans',sans-serif;">0043</div>
<div class="m" style="position:absolute;left:490px;top:301.2px;height:16px;line-height:16px;color:#2a2a2a"><span style="color:#3a943a"> * @fn      main</span></div>
<div style="position:absolute;left:441.40px;top:316.30px;height:16px;line-height:16px;font-size:12.2px;letter-spacing:-0.975px;color:#000;white-space:pre;font-weight:400;font-family:'Liberation Sans',sans-serif;">0044</div>
<div class="m" style="position:absolute;left:490px;top:317.2px;height:16px;line-height:16px;color:#2a2a2a"><span style="color:#3a943a"> *</span></div>
<div style="position:absolute;left:441.40px;top:332.30px;height:16px;line-height:16px;font-size:12.2px;letter-spacing:-0.975px;color:#000;white-space:pre;font-weight:400;font-family:'Liberation Sans',sans-serif;">0045</div>
<div class="m" style="position:absolute;left:490px;top:333.2px;height:16px;line-height:16px;color:#2a2a2a"><span style="color:#3a943a"> * @brief   Main program.</span></div>
<div style="position:absolute;left:441.40px;top:348.30px;height:16px;line-height:16px;font-size:12.2px;letter-spacing:-0.975px;color:#000;white-space:pre;font-weight:400;font-family:'Liberation Sans',sans-serif;">0046</div>
<div class="m" style="position:absolute;left:490px;top:349.2px;height:16px;line-height:16px;color:#2a2a2a"><span style="color:#3a943a"> *</span></div>
<div style="position:absolute;left:441.40px;top:364.30px;height:16px;line-height:16px;font-size:12.2px;letter-spacing:-0.975px;color:#000;white-space:pre;font-weight:400;font-family:'Liberation Sans',sans-serif;">0047</div>
<div class="m" style="position:absolute;left:490px;top:365.2px;height:16px;line-height:16px;color:#2a2a2a"><span style="color:#3a943a"> * @return  none</span></div>
<div style="position:absolute;left:441.40px;top:380.30px;height:16px;line-height:16px;font-size:12.2px;letter-spacing:-0.975px;color:#000;white-space:pre;font-weight:400;font-family:'Liberation Sans',sans-serif;">0048</div>
<div class="m" style="position:absolute;left:490px;top:381.2px;height:16px;line-height:16px;color:#2a2a2a"><span style="color:#3a943a"> */</span></div>
<div style="position:absolute;left:441.40px;top:396.30px;height:16px;line-height:16px;font-size:12.2px;letter-spacing:-0.975px;color:#000;white-space:pre;font-weight:400;font-family:'Liberation Sans',sans-serif;">0049</div>
<div class="m" style="position:absolute;left:490px;top:397.2px;height:16px;line-height:16px;color:#2a2a2a"><b style="color:#00007c">int</b> main<b>(</b><b style="color:#00007c">void</b><b>)</b></div>
<div style="position:absolute;left:441.40px;top:412.30px;height:16px;line-height:16px;font-size:12.2px;letter-spacing:-0.975px;color:#000;white-space:pre;font-weight:400;font-family:'Liberation Sans',sans-serif;">0050</div>
<svg style="left:422px;top:417px" width="7" height="7" viewBox="0 0 7 7"><path d="M3.5,1.1l2.3,2.4l-2.3,2.4l-2.3,-2.4z" fill="#00008c"/></svg>
<div style="position:absolute;left:478px;top:425px;width:1px;height:3px;background:#808080"></div>
<div style="position:absolute;left:473px;top:414px;width:11px;height:11px;background:#fff;border:1px solid #808080"></div>
<div style="position:absolute;left:475px;top:419px;width:7px;height:1px;background:#404040"></div>
<div class="m" style="position:absolute;left:490px;top:413.2px;height:16px;line-height:16px;color:#2a2a2a"><b>{</b></div>
<div style="position:absolute;left:441.40px;top:428.30px;height:16px;line-height:16px;font-size:12.2px;letter-spacing:-0.975px;color:#000;white-space:pre;font-weight:400;font-family:'Liberation Sans',sans-serif;">0051</div>
<svg style="left:422px;top:433px" width="7" height="7" viewBox="0 0 7 7"><path d="M3.5,1.1l2.3,2.4l-2.3,2.4l-2.3,-2.4z" fill="#00008c"/></svg>
<div style="position:absolute;left:478px;top:428px;width:1px;height:16px;background:#808080"></div>
<div class="m" style="position:absolute;left:490px;top:429.2px;height:16px;line-height:16px;color:#2a2a2a">    u8 i <b>=</b> <span style="color:#e6484c">0</span><b>;</b></div>
<div style="position:absolute;left:441.40px;top:444.30px;height:16px;line-height:16px;font-size:12.2px;letter-spacing:-0.975px;color:#000;white-space:pre;font-weight:400;font-family:'Liberation Sans',sans-serif;">0052</div>
<div style="position:absolute;left:478px;top:444px;width:1px;height:16px;background:#808080"></div>
<div style="position:absolute;left:441.40px;top:460.30px;height:16px;line-height:16px;font-size:12.2px;letter-spacing:-0.975px;color:#000;white-space:pre;font-weight:400;font-family:'Liberation Sans',sans-serif;">0053</div>
<svg style="left:422px;top:465px" width="7" height="7" viewBox="0 0 7 7"><path d="M3.5,1.1l2.3,2.4l-2.3,2.4l-2.3,-2.4z" fill="#00008c"/></svg>
<div style="position:absolute;left:478px;top:460px;width:1px;height:16px;background:#808080"></div>
<div class="m" style="position:absolute;left:490px;top:461.2px;height:16px;line-height:16px;color:#2a2a2a">    NVIC_PriorityGroupConfig<b>(</b>NVIC_PriorityGroup_2<b>)</b><b>;</b></div>
<div style="position:absolute;left:441.40px;top:476.30px;height:16px;line-height:16px;font-size:12.2px;letter-spacing:-0.975px;color:#000;white-space:pre;font-weight:400;font-family:'Liberation Sans',sans-serif;">0054</div>
<svg style="left:422px;top:481px" width="7" height="7" viewBox="0 0 7 7"><path d="M3.5,1.1l2.3,2.4l-2.3,2.4l-2.3,-2.4z" fill="#00008c"/></svg>
<div style="position:absolute;left:478px;top:476px;width:1px;height:16px;background:#808080"></div>
<div class="m" style="position:absolute;left:490px;top:477.2px;height:16px;line-height:16px;color:#2a2a2a">    Delay_Init<b>(</b><b>)</b><b>;</b></div>
<div style="position:absolute;left:441.40px;top:492.30px;height:16px;line-height:16px;font-size:12.2px;letter-spacing:-0.975px;color:#000;white-space:pre;font-weight:400;font-family:'Liberation Sans',sans-serif;">0055</div>
<svg style="left:422px;top:497px" width="7" height="7" viewBox="0 0 7 7"><path d="M3.5,1.1l2.3,2.4l-2.3,2.4l-2.3,-2.4z" fill="#00008c"/></svg>
<div style="position:absolute;left:478px;top:492px;width:1px;height:16px;background:#808080"></div>
<div class="m" style="position:absolute;left:490px;top:493.2px;height:16px;line-height:16px;color:#2a2a2a">    USART_Printf_Init<b>(</b><span style="color:#e6484c">115200</span><b>)</b><b>;</b></div>
<div style="position:absolute;left:441.40px;top:508.30px;height:16px;line-height:16px;font-size:12.2px;letter-spacing:-0.975px;color:#000;white-space:pre;font-weight:400;font-family:'Liberation Sans',sans-serif;">0056</div>
<svg style="left:422px;top:513px" width="7" height="7" viewBox="0 0 7 7"><path d="M3.5,1.1l2.3,2.4l-2.3,2.4l-2.3,-2.4z" fill="#00008c"/></svg>
<div style="position:absolute;left:478px;top:508px;width:1px;height:16px;background:#808080"></div>
<div class="m" style="position:absolute;left:490px;top:509.2px;height:16px;line-height:16px;color:#2a2a2a">    printf<b>(</b><span style="color:#84842a">&quot;SystemClk:%d\r\n&quot;</span><b>,</b> SystemCoreClock<b>);</b></div>
<div style="position:absolute;left:441.40px;top:524.30px;height:16px;line-height:16px;font-size:12.2px;letter-spacing:-0.975px;color:#000;white-space:pre;font-weight:400;font-family:'Liberation Sans',sans-serif;">0057</div>
<div style="position:absolute;left:478px;top:524px;width:1px;height:16px;background:#808080"></div>
<div style="position:absolute;left:441.40px;top:540.30px;height:16px;line-height:16px;font-size:12.2px;letter-spacing:-0.975px;color:#000;white-space:pre;font-weight:400;font-family:'Liberation Sans',sans-serif;">0058</div>
<svg style="left:419px;top:542px" width="11" height="13" viewBox="0 0 11 13"><path d="M1.2,4h3.6v-2.8l5,5.3l-5,5.3v-2.8h-3.6z" fill="#1414d0" stroke="#00008c" stroke-width="1"/><path d="M3,5.6h2.4" stroke="#8aa0ff" stroke-width=".8"/></svg>
<div style="position:absolute;left:478px;top:540px;width:1px;height:16px;background:#808080"></div>
<div style="position:absolute;left:490px;top:540px;width:803px;height:16px;background:#0078d7"></div>
<div style="position:absolute;left:489px;top:540px;width:1px;height:16px;background:#000"></div>
<div style="position:absolute;left:1130px;top:540px;width:1px;height:16px;background:#9fcdf0"></div>
<div class="m" style="position:absolute;left:490px;top:541.2px;height:16px;line-height:16px;color:#2a2a2a"><span style="color:#fff">    printf<b>(</b>"GPIO Toggle TEST\r\n"<b>);</b></span></div>
<div style="position:absolute;left:441.40px;top:556.30px;height:16px;line-height:16px;font-size:12.2px;letter-spacing:-0.975px;color:#000;white-space:pre;font-weight:400;font-family:'Liberation Sans',sans-serif;">0059</div>
<svg style="left:422px;top:561px" width="7" height="7" viewBox="0 0 7 7"><path d="M3.5,1.1l2.3,2.4l-2.3,2.4l-2.3,-2.4z" fill="#00008c"/></svg>
<div style="position:absolute;left:478px;top:556px;width:1px;height:16px;background:#808080"></div>
<div class="m" style="position:absolute;left:490px;top:557.2px;height:16px;line-height:16px;color:#2a2a2a">    GPIO_Toggle_INIT<b>(</b><b>)</b><b>;</b></div>
<div style="position:absolute;left:441.40px;top:572.30px;height:16px;line-height:16px;font-size:12.2px;letter-spacing:-0.975px;color:#000;white-space:pre;font-weight:400;font-family:'Liberation Sans',sans-serif;">0060</div>
<div style="position:absolute;left:478px;top:572px;width:1px;height:16px;background:#808080"></div>
<div style="position:absolute;left:441.40px;top:588.30px;height:16px;line-height:16px;font-size:12.2px;letter-spacing:-0.975px;color:#000;white-space:pre;font-weight:400;font-family:'Liberation Sans',sans-serif;">0061</div>
<svg style="left:422px;top:593px" width="7" height="7" viewBox="0 0 7 7"><path d="M3.5,1.1l2.3,2.4l-2.3,2.4l-2.3,-2.4z" fill="#00008c"/></svg>
<div style="position:absolute;left:478px;top:588px;width:1px;height:16px;background:#808080"></div>
<div class="m" style="position:absolute;left:490px;top:589.2px;height:16px;line-height:16px;color:#2a2a2a">    <b style="color:#00007c">while</b><b>(</b><span style="color:#e6484c">1</span><b>)</b></div>
<div style="position:absolute;left:441.40px;top:604.30px;height:16px;line-height:16px;font-size:12.2px;letter-spacing:-0.975px;color:#000;white-space:pre;font-weight:400;font-family:'Liberation Sans',sans-serif;">0062</div>
<svg style="left:422px;top:609px" width="7" height="7" viewBox="0 0 7 7"><path d="M3.5,1.1l2.3,2.4l-2.3,2.4l-2.3,-2.4z" fill="#00008c"/></svg>
<div style="position:absolute;left:478px;top:604px;width:1px;height:16px;background:#808080"></div>
<div style="position:absolute;left:473px;top:606px;width:11px;height:11px;background:#fff;border:1px solid #808080"></div>
<div style="position:absolute;left:475px;top:611px;width:7px;height:1px;background:#404040"></div>
<div class="m" style="position:absolute;left:490px;top:605.2px;height:16px;line-height:16px;color:#2a2a2a">    <b>{</b></div>
<div style="position:absolute;left:441.40px;top:620.30px;height:16px;line-height:16px;font-size:12.2px;letter-spacing:-0.975px;color:#000;white-space:pre;font-weight:400;font-family:'Liberation Sans',sans-serif;">0063</div>
<svg style="left:422px;top:625px" width="7" height="7" viewBox="0 0 7 7"><path d="M3.5,1.1l2.3,2.4l-2.3,2.4l-2.3,-2.4z" fill="#00008c"/></svg>
<div style="position:absolute;left:478px;top:620px;width:1px;height:16px;background:#808080"></div>
<div class="m" style="position:absolute;left:490px;top:621.2px;height:16px;line-height:16px;color:#2a2a2a">        Delay_Ms<b>(</b><span style="color:#e6484c">250</span><b>)</b><b>;</b></div>
<div style="position:absolute;left:441.40px;top:636.30px;height:16px;line-height:16px;font-size:12.2px;letter-spacing:-0.975px;color:#000;white-space:pre;font-weight:400;font-family:'Liberation Sans',sans-serif;">0064</div>
<svg style="left:422px;top:641px" width="7" height="7" viewBox="0 0 7 7"><path d="M3.5,1.1l2.3,2.4l-2.3,2.4l-2.3,-2.4z" fill="#00008c"/></svg>
<div style="position:absolute;left:478px;top:636px;width:1px;height:16px;background:#808080"></div>
<div class="m" style="position:absolute;left:490px;top:637.2px;height:16px;line-height:16px;color:#2a2a2a">        GPIO_WriteBit<b>(</b>GPIOD<b>,</b> GPIO_Pin_0<b>,</b> <b>(</b>i <b>=</b><b>=</b> <span style="color:#e6484c">0</span><b>)</b> <b>?</b> <b>(</b>i <b>=</b> Bit_SET<b>)</b> <b>:</b> <b>(</b>i <b>=</b> Bit_RESET<b>)</b><b>)</b><b>;</b></div>
<div style="position:absolute;left:441.40px;top:652.30px;height:16px;line-height:16px;font-size:12.2px;letter-spacing:-0.975px;color:#000;white-space:pre;font-weight:400;font-family:'Liberation Sans',sans-serif;">0065</div>
<svg style="left:422px;top:657px" width="7" height="7" viewBox="0 0 7 7"><path d="M3.5,1.1l2.3,2.4l-2.3,2.4l-2.3,-2.4z" fill="#00008c"/></svg>
<div style="position:absolute;left:478px;top:652px;width:1px;height:14px;background:#808080"></div>
<div style="position:absolute;left:478px;top:660px;width:6px;height:1px;background:#808080"></div>
<div class="m" style="position:absolute;left:490px;top:653.2px;height:16px;line-height:16px;color:#2a2a2a">    <b>}</b></div>
<div style="position:absolute;left:520px;top:620px;width:1px;height:32px;background:repeating-linear-gradient(180deg,#b0b0b0 0 1px,transparent 1px 2px)"></div>
<div style="position:absolute;left:404px;top:665px;width:907px;height:1px;background:#f4f4f4"></div>
<div style="position:absolute;left:403px;top:666px;width:909px;height:1px;background:#a0a0a0"></div>
<div style="position:absolute;left:1315px;top:666px;width:285px;height:1px;background:#9a9a9a"></div>
<div style="position:absolute;left:1599px;top:74px;width:1px;height:593px;background:#9a9a9a"></div>
<div style="position:absolute;left:1316px;top:95px;width:282px;height:570px;background:#fff;border:1px solid #dadada"></div>
<div style="position:absolute;left:1316px;top:75px;width:47px;height:22px;background:#fff;border:1px solid #dadada;border-bottom:none"></div>
<div style="position:absolute;left:1363px;top:77px;width:46px;height:19px;background:#f0f0f0;border:1px solid #dadada;border-left:none"></div>
<div style="position:absolute;left:1324.00px;top:77.40px;height:16px;line-height:16px;font-size:11.3px;letter-spacing:-0.402px;color:#000;white-space:pre;font-weight:400;font-family:'Liberation Sans',sans-serif;">Watch</div>
<div style="position:absolute;left:1366.40px;top:79.00px;height:16px;line-height:16px;font-size:11.3px;letter-spacing:-0.519px;color:#000;white-space:pre;font-weight:400;font-family:'Liberation Sans',sans-serif;">Memory</div>
<div style="position:absolute;left:1320px;top:99px;width:275px;height:564px;background:#fff;border:1px solid #a0a0a0"></div>
<div style="position:absolute;left:1321px;top:100px;width:273px;height:563px;border:1px solid #e4e4e4;border-right:none;border-bottom:none"></div>
<div style="position:absolute;left:1323.00px;top:102.00px;height:16px;line-height:16px;font-size:11.3px;letter-spacing:-1.047px;color:#000;white-space:pre;font-weight:400;font-family:'Liberation Sans',sans-serif;">Name</div>
<div style="position:absolute;left:1459.50px;top:102.00px;height:16px;line-height:16px;font-size:11.3px;letter-spacing:-0.641px;color:#000;white-space:pre;font-weight:400;font-family:'Liberation Sans',sans-serif;">Value</div>
<div style="position:absolute;left:1456px;top:101px;width:1px;height:18px;background:#e0e0e0"></div>
<div style="position:absolute;left:1592px;top:101px;width:1px;height:18px;background:#e0e0e0"></div>
<div style="position:absolute;left:1322px;top:119.5px;width:270.5px;height:18.5px;background:#99d1ff"></div>
<div style="position:absolute;left:1456px;top:119px;width:1px;height:19px;background:#fff"></div>
<div style="position:absolute;left:0px;top:690px;width:1598px;height:146px;background:#fff;border:1px solid #dcdcdc;border-left-color:#c8c8c8"></div>
<div style="position:absolute;left:4px;top:694px;width:1590px;height:118px;background:#fff;border:1px solid #dcdcdc"></div>
<div style="position:absolute;left:0px;top:670px;width:47px;height:21px;background:#fff;border:1px solid #dadada;border-bottom:none;border-left-color:#c8c8c8"></div>
<div style="position:absolute;left:47px;top:672px;width:47px;height:19px;background:#f0f0f0;border:1px solid #dadada;border-left:none"></div>
<div style="position:absolute;left:7.40px;top:672.00px;height:16px;line-height:16px;font-size:11.3px;letter-spacing:-0.416px;color:#000;white-space:pre;font-weight:400;font-family:'Liberation Sans',sans-serif;">main.c</div>
<div style="position:absolute;left:50.30px;top:673.40px;height:16px;line-height:16px;font-size:11.3px;letter-spacing:-0.117px;color:#000;white-space:pre;font-weight:400;font-family:'Liberation Sans',sans-serif;">debug.c</div>
<div style="position:absolute;left:9px;top:699px;width:1580px;height:111px;background:#fff;border:1px solid #767676"></div>
<div style="position:absolute;left:10px;top:700px;width:1578px;height:109px;border:1px solid #d8d8d8;border-right-color:#b4b4b4;border-bottom-color:#b4b4b4"></div>
<div style="position:absolute;left:14.30px;top:701.00px;height:16px;line-height:16px;font-size:11.3px;letter-spacing:-0.034px;color:#000;white-space:pre;font-weight:400;font-family:'Liberation Sans',sans-serif;">Info : device id = 0x17f1abcd</div>
<div style="position:absolute;left:14.30px;top:714.00px;height:16px;line-height:16px;font-size:11.3px;letter-spacing:-0.046px;color:#000;white-space:pre;font-weight:400;font-family:'Liberation Sans',sans-serif;">Info : flash size = 16kbytes</div>
<div style="position:absolute;left:14.30px;top:727.00px;height:16px;line-height:16px;font-size:11.3px;letter-spacing:-0.140px;color:#000;white-space:pre;font-weight:400;font-family:'Liberation Sans',sans-serif;">Warn : Prefer GDB command &quot;target extended-remote :3333&quot; instead of &quot;target remote :3333&quot;</div>
<div style="position:absolute;left:14.30px;top:740.00px;height:16px;line-height:16px;font-size:11.3px;letter-spacing:-0.004px;color:#000;white-space:pre;font-weight:400;font-family:'Liberation Sans',sans-serif;">Info : JTAG tap: riscv.cpu tap/device found: 0x00000001 (mfg: 0x000 (&lt;invalid&gt;), part: 0x0000, ver: 0x0)</div>
<div style="position:absolute;left:14.30px;top:753.00px;height:16px;line-height:16px;font-size:11.3px;letter-spacing:-0.202px;color:#000;white-space:pre;font-weight:400;font-family:'Liberation Sans',sans-serif;">Warn : Bypassing JTAG setup events due to errors</div>
<div style="position:absolute;left:11px;top:792px;width:1559px;height:17px;background:#f0f0f0"></div>
<div style="position:absolute;left:1570px;top:701px;width:16px;height:108px;background:#f0f0f0"></div>
<div style="position:absolute;left:1570px;top:756px;width:16px;height:18px;background:#cdcdcd"></div>
<svg style="left:1572px;top:706px" width="11" height="8" viewBox="0 0 11 8"><path d="M1.6,6l3.9,-3.9l3.9,3.9" fill="none" stroke="#505050" stroke-width="1.7"/></svg>
<svg style="left:1572px;top:778px" width="11" height="8" viewBox="0 0 11 8"><path d="M1.6,2l3.9,3.9l3.9,-3.9" fill="none" stroke="#505050" stroke-width="1.7"/></svg>
<svg style="left:15px;top:795px" width="8" height="11" viewBox="0 0 8 11"><path d="M6,1.6l-3.9,3.9l3.9,3.9" fill="none" stroke="#c0c0c0" stroke-width="1.7"/></svg>
<svg style="left:1556px;top:795px" width="8" height="11" viewBox="0 0 8 11"><path d="M2,1.6l3.9,3.9l-3.9,3.9" fill="none" stroke="#c0c0c0" stroke-width="1.7"/></svg>
<div style="position:absolute;left:6px;top:812px;width:71px;height:19px;background:#f0f0f0;border:1px solid #dadada;border-top:none"></div>
<div style="position:absolute;left:77px;top:812px;width:81px;height:19px;background:#f0f0f0;border:1px solid #dadada;border-top:none;border-left:none"></div>
<div style="position:absolute;left:158px;top:811px;width:49px;height:22px;background:#fff;border:1px solid #dadada;border-top:none;border-left:none"></div>
<div style="position:absolute;left:11.40px;top:813.60px;height:16px;line-height:16px;font-size:11.3px;letter-spacing:-0.261px;color:#000;white-space:pre;font-weight:400;font-family:'Liberation Sans',sans-serif;">Build Output</div>
<div style="position:absolute;left:82.50px;top:813.60px;height:16px;line-height:16px;font-size:11.3px;letter-spacing:-0.222px;color:#000;white-space:pre;font-weight:400;font-family:'Liberation Sans',sans-serif;">Search Output</div>
<div style="position:absolute;left:164.40px;top:815.60px;height:16px;line-height:16px;font-size:11.3px;letter-spacing:-0.549px;color:#000;white-space:pre;font-weight:400;font-family:'Liberation Sans',sans-serif;">Debug</div>
</body></html>
